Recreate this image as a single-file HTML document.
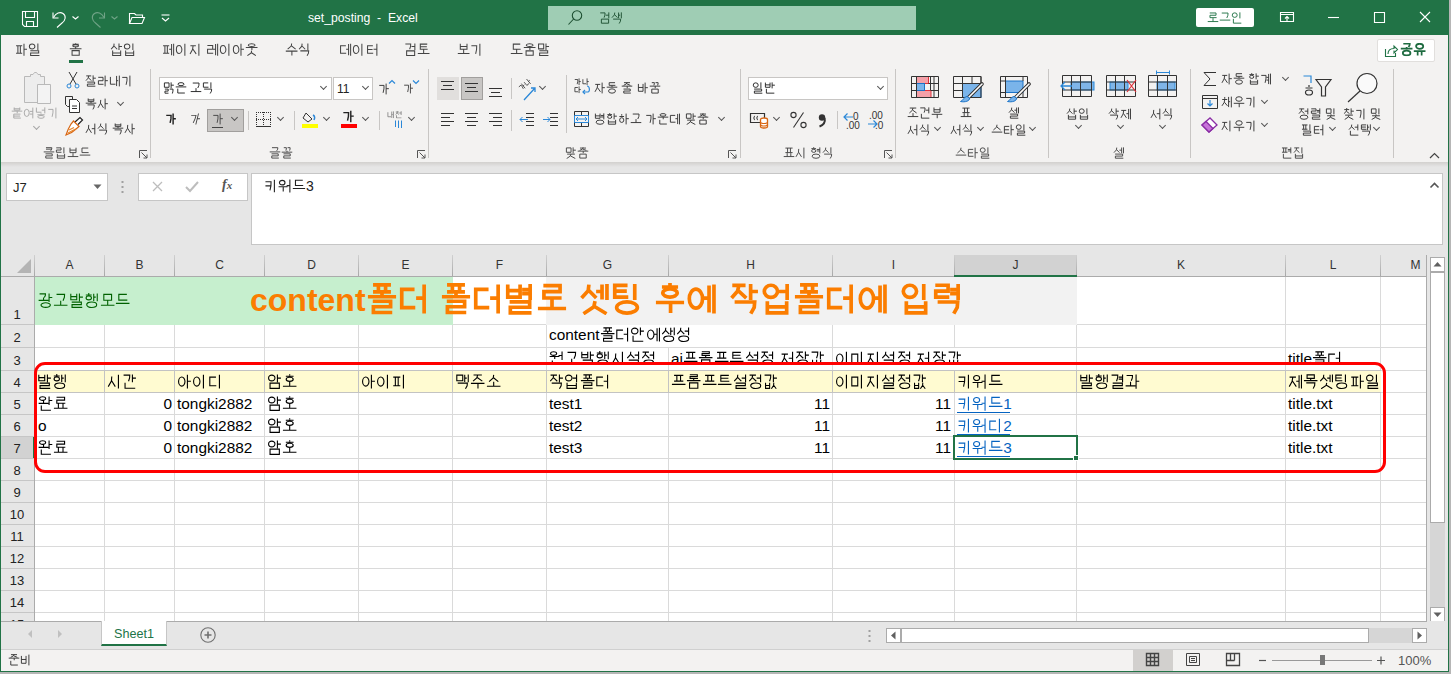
<!DOCTYPE html>
<html><head><meta charset="utf-8">
<style>
*{box-sizing:border-box;margin:0;padding:0}
html,body{width:1451px;height:674px;overflow:hidden;background:#b6b6b6;font-family:"Liberation Sans",sans-serif}
.a{position:absolute}
.t{position:absolute;white-space:nowrap;line-height:1}
svg{display:block}
#win{position:absolute;left:0;top:0;width:1449px;height:672px;background:#f3f2f1;overflow:hidden}
/* title */
#title{left:0;top:0;width:1451px;height:35px;background:#217346}
.wt{color:#fff;font-size:12px}
/* tabs */
.tab{font-size:13.3px;color:#444;top:43px}
/* ribbon */
.rb{font-size:12px;color:#333}
.gl{font-size:12px;color:#444;top:147px}
.sep{position:absolute;width:1px;background:#c8c6c4}
.chev{position:absolute;width:5px;height:5px;border-right:1.2px solid #555;border-bottom:1.2px solid #555;transform:rotate(45deg)}
/* grid */
.ch{position:absolute;top:255px;height:22px;font-size:12px;color:#333;text-align:center;line-height:21px}
.cell{position:absolute;font-size:15.4px;color:#000;white-space:nowrap;line-height:15px;margin-top:-1px}
.cell .hg{--sw:7.2}
.r{text-align:right}
.kt{font-size:0;line-height:0;color:transparent}
.hg{display:inline-block!important;width:1em;height:1em;vertical-align:-0.13em;overflow:visible;fill:none;stroke:currentColor;stroke-width:var(--sw,7.8);stroke-linejoin:miter;stroke-linecap:butt}
</style></head><body><svg width="0" height="0" style="position:absolute;display:block"><defs><symbol id="gac00" viewBox="0 0 100 100"><path d="M10.3 20 L50.3 20 L49.4 49 L42.5 82 M67.6 5 L67.6 95 M67.6 47.3 L90.5 47.3"/></symbol><symbol id="gac04" viewBox="0 0 100 100"><path d="M10.3 7.5 L50.3 7.5 L49.4 26 L42.5 47 M67.6 3 L67.6 53 M67.6 26.5 L90.5 26.5 M19.8 57 L19.8 92.9 L86 92.9"/></symbol><symbol id="gac12" viewBox="0 0 100 100"><path d="M10.3 7.5 L50.3 7.5 L49.4 26 L42.5 47 M67.6 3 L67.6 53 M67.6 26.5 L90.5 26.5 M16.5 57 L16.5 93.3 L43.1 93.3 L43.1 57 M16.5 74.5 L43.1 74.5 M70.2 57 L68.6 74.5 L54.3 96 M69.5 73.4 L86 96"/></symbol><symbol id="gac74" viewBox="0 0 100 100"><path d="M10.3 7.5 L50.3 7.5 L49.4 26 L42.5 47 M81.7 3 L81.7 53 M56.6 26.5 L81.7 26.5 M19.8 57 L19.8 92.9 L86 92.9"/></symbol><symbol id="gac80" viewBox="0 0 100 100"><path d="M10.3 7.5 L50.3 7.5 L49.4 26 L42.5 47 M81.7 3 L81.7 53 M56.6 26.5 L81.7 26.5 M19.8 59.3 L80.2 59.3 L80.2 93.3 L19.8 93.3Z"/></symbol><symbol id="gacb0" viewBox="0 0 100 100"><path d="M10.3 7.5 L50.3 7.5 L49.4 26 L42.5 47 M81.7 3 L81.7 53 M56.6 20.5 L81.7 20.5 M56.6 33 L81.7 33 M17.6 59 L80.2 59 L80.2 75.7 L19.8 75.7 L19.8 93.3 L86 93.3"/></symbol><symbol id="gacc4" viewBox="0 0 100 100"><path d="M10.3 20 L50.3 20 L49.4 49 L42.5 82 M72 7.7 L72 92.3 M87.4 5 L87.4 95 M53.5 36.5 L72 36.5 M53.5 59 L72 59"/></symbol><symbol id="gace0" viewBox="0 0 100 100"><path d="M23 8.6 L75.2 8.6 L74 28 L65 50 M6 79.6 L94 79.6 M50 51 L50 79.6"/></symbol><symbol id="gacf5" viewBox="0 0 100 100"><path d="M24.8 5.6 L73.5 5.6 L72.4 17 L64 30 M6 43 L94 43 M50 31 L50 43 M21.2 75A28.8 18 0 1 0 78.8 75A28.8 18 0 1 0 21.2 75"/></symbol><symbol id="gacfc" viewBox="0 0 100 100"><path d="M10.2 10.2 L48.5 10.2 L47.6 26 L41 44 M4 77.4 L68 77.4 M36 50.4 L36 77.4 M72 4 L72 96 M72 47.2 L92.8 47.2"/></symbol><symbol id="gad11" viewBox="0 0 100 100"><path d="M10.2 5.6 L48.5 5.6 L47.6 17 L41 30 M4 47.6 L68 47.6 M36 30 L36 47.6 M72 3 L72 58 M72 28.8 L92.8 28.8 M19.4 78.5A30.6 14.8 0 1 0 80.6 78.5A30.6 14.8 0 1 0 19.4 78.5"/></symbol><symbol id="gadf8" viewBox="0 0 100 100"><path d="M23 8.6 L75.2 8.6 L74 28 L65 50 M6 67.5 L94 67.5"/></symbol><symbol id="gae00" viewBox="0 0 100 100"><path d="M24.8 5.7 L73.5 5.7 L72.4 18 L64 32 M6 41 L94 41 M21.2 57 L76.9 57 L76.9 74.2 L23.1 74.2 L23.1 92.2 L82 92.2"/></symbol><symbol id="gae30" viewBox="0 0 100 100"><path d="M10.3 20 L50.3 20 L49.4 49 L42.5 82 M74.2 5 L74.2 95"/></symbol><symbol id="gaf34" viewBox="0 0 100 100"><path d="M23.2 5.6 L44.7 5.6 L44.2 17 L40.5 30 M54.6 5.6 L76 5.6 L75.5 17 L71.8 30 M6 43 L94 43 M50 31 L50 43 M21.2 57 L76.9 57 L76.9 74.2 L23.1 74.2 L23.1 92.2 L82 92.2"/></symbol><symbol id="gafc8" viewBox="0 0 100 100"><path d="M23.2 5.4 L44.7 5.4 L44.2 16 L40.5 28 M54.6 5.4 L76 5.4 L75.5 16 L71.8 28 M6 34.4 L94 34.4 M51.8 34.4 L51.8 52 M23.1 59.3 L76.9 59.3 L76.9 92.3 L23.1 92.3Z"/></symbol><symbol id="gb098" viewBox="0 0 100 100"><path d="M11.7 16 L11.7 76.7 L54 76.7 M67.6 5 L67.6 95 M67.6 47.3 L90.5 47.3"/></symbol><symbol id="gb0b4" viewBox="0 0 100 100"><path d="M11.7 16 L11.7 76.7 L54 76.7 M63.2 7.7 L63.2 92.3 M86.1 5 L86.1 95 M63.2 47.3 L76.4 47.3"/></symbol><symbol id="gb123" viewBox="0 0 100 100"><path d="M11.7 5 L11.7 43.6 L54 43.6 M81.7 3 L81.7 53 M56.6 26.5 L81.7 26.5 M50 53.1 L50 60.9 M19.8 64.8 L80.2 64.8 M22.6 82.3A27.4 11.7 0 1 0 77.4 82.3A27.4 11.7 0 1 0 22.6 82.3"/></symbol><symbol id="gb2e4" viewBox="0 0 100 100"><path d="M51.7 20 L11.7 20 L11.7 76.7 L54 76.7 M67.6 5 L67.6 95 M67.6 47.3 L90.5 47.3"/></symbol><symbol id="gb354" viewBox="0 0 100 100"><path d="M51.7 20 L11.7 20 L11.7 76.7 L54 76.7 M81.7 5 L81.7 95 M56.6 47.3 L81.7 47.3"/></symbol><symbol id="gb370" viewBox="0 0 100 100"><path d="M51.7 20 L11.7 20 L11.7 76.7 L54 76.7 M72 7.7 L72 92.3 M87.4 5 L87.4 95 M53.5 47.3 L72 47.3"/></symbol><symbol id="gb3c4" viewBox="0 0 100 100"><path d="M77 8.6 L24.8 8.6 L24.8 46.5 L80 46.5 M6 79.6 L94 79.6 M50 51 L50 79.6"/></symbol><symbol id="gb3d9" viewBox="0 0 100 100"><path d="M75.2 5.6 L26.5 5.6 L26.5 27.9 L78 27.9 M6 43 L94 43 M50 31 L50 43 M21.2 75A28.8 18 0 1 0 78.8 75A28.8 18 0 1 0 21.2 75"/></symbol><symbol id="gb4dc" viewBox="0 0 100 100"><path d="M77 8.6 L24.8 8.6 L24.8 46.5 L80 46.5 M6 67.5 L94 67.5"/></symbol><symbol id="gb514" viewBox="0 0 100 100"><path d="M51.7 20 L11.7 20 L11.7 76.7 L54 76.7 M74.2 5 L74.2 95"/></symbol><symbol id="gb515" viewBox="0 0 100 100"><path d="M51.7 7.5 L11.7 7.5 L11.7 43.6 L54 43.6 M74.2 3 L74.2 53 M17.6 59.3 L80.2 59.3 L78.8 76.5 L68 96"/></symbol><symbol id="gb77c" viewBox="0 0 100 100"><path d="M10.3 19.3 L50.3 19.3 L50.3 47.7 L11.7 47.7 L11.7 77.4 L54 77.4 M67.6 5 L67.6 95 M67.6 47.3 L90.5 47.3"/></symbol><symbol id="gb808" viewBox="0 0 100 100"><path d="M10.3 19.3 L50.3 19.3 L50.3 47.7 L11.7 47.7 L11.7 77.4 L54 77.4 M72 7.7 L72 92.3 M87.4 5 L87.4 95 M53.5 47.3 L72 47.3"/></symbol><symbol id="gb825" viewBox="0 0 100 100"><path d="M10.3 7.1 L50.3 7.1 L50.3 25.2 L11.7 25.2 L11.7 44.1 L54 44.1 M81.7 3 L81.7 53 M56.6 20.5 L81.7 20.5 M56.6 33 L81.7 33 M17.6 59.3 L80.2 59.3 L78.8 76.5 L68 96"/></symbol><symbol id="gb82c" viewBox="0 0 100 100"><path d="M10.3 7.1 L50.3 7.1 L50.3 25.2 L11.7 25.2 L11.7 44.1 L54 44.1 M81.7 3 L81.7 53 M56.6 20.5 L81.7 20.5 M56.6 33 L81.7 33 M17.6 59 L80.2 59 L80.2 75.7 L19.8 75.7 L19.8 93.3 L86 93.3"/></symbol><symbol id="gb85c" viewBox="0 0 100 100"><path d="M23 8.2 L75.2 8.2 L75.2 27.1 L24.8 27.1 L24.8 46.9 L80 46.9 M6 79.6 L94 79.6 M50 51 L50 79.6"/></symbol><symbol id="gb86c" viewBox="0 0 100 100"><path d="M24.8 5.3 L73.5 5.3 L73.5 16.5 L26.5 16.5 L26.5 28.2 L78 28.2 M6 43 L94 43 M50 31 L50 43 M23.1 57.4 L76.9 57.4 L76.9 92.2 L23.1 92.2Z"/></symbol><symbol id="gb8cc" viewBox="0 0 100 100"><path d="M23 8.2 L75.2 8.2 L75.2 27.1 L24.8 27.1 L24.8 46.9 L80 46.9 M6 79.6 L94 79.6 M35 51 L35 79.6 M65 51 L65 79.6"/></symbol><symbol id="gb9bd" viewBox="0 0 100 100"><path d="M10.3 7.1 L50.3 7.1 L50.3 25.2 L11.7 25.2 L11.7 44.1 L54 44.1 M74.2 3 L74.2 53 M19.8 57 L19.8 93.3 L80.2 93.3 L80.2 57 M19.8 74.5 L80.2 74.5"/></symbol><symbol id="gb9d0" viewBox="0 0 100 100"><path d="M11.7 7.5 L50.3 7.5 L50.3 44.1 L11.7 44.1Z M67.6 3 L67.6 53 M67.6 26.5 L90.5 26.5 M17.6 59 L80.2 59 L80.2 75.7 L19.8 75.7 L19.8 93.3 L86 93.3"/></symbol><symbol id="gb9d1" viewBox="0 0 100 100"><path d="M11.7 7.5 L50.3 7.5 L50.3 44.1 L11.7 44.1Z M67.6 3 L67.6 53 M67.6 26.5 L90.5 26.5 M15.6 59 L43.1 59 L43.1 75.7 L16.5 75.7 L16.5 93.3 L45.7 93.3 M55.9 59.3 L83.5 59.3 L82.8 76.5 L78.1 96"/></symbol><symbol id="gb9de" viewBox="0 0 100 100"><path d="M11.7 7.5 L50.3 7.5 L50.3 44.1 L11.7 44.1Z M67.6 3 L67.6 53 M67.6 26.5 L90.5 26.5 M17.6 59.3 L82.4 59.3 M50 59.3 L42.8 76.5 L14 96 M46.4 74.5 L86 96"/></symbol><symbol id="gb9e5" viewBox="0 0 100 100"><path d="M11.7 7.5 L50.3 7.5 L50.3 44.1 L11.7 44.1Z M63.2 4.5 L63.2 51.5 M86.1 3 L86.1 53 M63.2 26.5 L76.4 26.5 M17.6 59.3 L80.2 59.3 L78.8 76.5 L68 96"/></symbol><symbol id="gbaa8" viewBox="0 0 100 100"><path d="M24.8 8.6 L75.2 8.6 L75.2 46.9 L24.8 46.9Z M6 79.6 L94 79.6 M50 51 L50 79.6"/></symbol><symbol id="gbaa9" viewBox="0 0 100 100"><path d="M26.5 5.6 L73.5 5.6 L73.5 28.2 L26.5 28.2Z M6 43 L94 43 M50 31 L50 43 M21.2 57.4 L76.9 57.4 L75.6 75 L66 95"/></symbol><symbol id="gbbf8" viewBox="0 0 100 100"><path d="M11.7 20 L50.3 20 L50.3 77.4 L11.7 77.4Z M74.2 5 L74.2 95"/></symbol><symbol id="gbc0f" viewBox="0 0 100 100"><path d="M11.7 7.5 L50.3 7.5 L50.3 44.1 L11.7 44.1Z M74.2 3 L74.2 53 M50 52.3 L50 61.7 M17.6 64.8 L82.4 64.8 M50 64.8 L42.8 79.6 L14 96 M46.4 78.5 L86 96"/></symbol><symbol id="gbc14" viewBox="0 0 100 100"><path d="M11.7 16 L11.7 77.4 L50.3 77.4 L50.3 16 M11.7 45.7 L50.3 45.7 M67.6 5 L67.6 95 M67.6 47.3 L90.5 47.3"/></symbol><symbol id="gbc18" viewBox="0 0 100 100"><path d="M11.7 5 L11.7 44.1 L50.3 44.1 L50.3 5 M11.7 23.9 L50.3 23.9 M67.6 3 L67.6 53 M67.6 26.5 L90.5 26.5 M19.8 57 L19.8 92.9 L86 92.9"/></symbol><symbol id="gbc1c" viewBox="0 0 100 100"><path d="M11.7 5 L11.7 44.1 L50.3 44.1 L50.3 5 M11.7 23.9 L50.3 23.9 M67.6 3 L67.6 53 M67.6 26.5 L90.5 26.5 M17.6 59 L80.2 59 L80.2 75.7 L19.8 75.7 L19.8 93.3 L86 93.3"/></symbol><symbol id="gbcc4" viewBox="0 0 100 100"><path d="M11.7 5 L11.7 44.1 L50.3 44.1 L50.3 5 M11.7 23.9 L50.3 23.9 M81.7 3 L81.7 53 M56.6 20.5 L81.7 20.5 M56.6 33 L81.7 33 M17.6 59 L80.2 59 L80.2 75.7 L19.8 75.7 L19.8 93.3 L86 93.3"/></symbol><symbol id="gbcd1" viewBox="0 0 100 100"><path d="M11.7 5 L11.7 44.1 L50.3 44.1 L50.3 5 M11.7 23.9 L50.3 23.9 M81.7 3 L81.7 53 M56.6 20.5 L81.7 20.5 M56.6 33 L81.7 33 M17.6 76.5A32.4 17.6 0 1 0 82.4 76.5A32.4 17.6 0 1 0 17.6 76.5"/></symbol><symbol id="gbcf4" viewBox="0 0 100 100"><path d="M24.8 6 L24.8 46.9 L75.2 46.9 L75.2 6 M24.8 25.8 L75.2 25.8 M6 79.6 L94 79.6 M50 51 L50 79.6"/></symbol><symbol id="gbcf5" viewBox="0 0 100 100"><path d="M26.5 4 L26.5 28.2 L73.5 28.2 L73.5 4 M26.5 15.7 L73.5 15.7 M6 43 L94 43 M50 31 L50 43 M21.2 57.4 L76.9 57.4 L75.6 75 L66 95"/></symbol><symbol id="gbd80" viewBox="0 0 100 100"><path d="M24.8 4 L24.8 43.1 L75.2 43.1 L75.2 4 M24.8 22.9 L75.2 22.9 M6 61 L94 61 M51.8 61 L51.8 93.5"/></symbol><symbol id="gbd99" viewBox="0 0 100 100"><path d="M26.5 4 L26.5 26.3 L73.5 26.3 L73.5 4 M26.5 14.8 L73.5 14.8 M6 34.4 L94 34.4 M51.8 34.4 L51.8 52 M78.8 59.3 L23.1 59.3 L23.1 92.3 L82 92.3 M23.1 75.6 L75.6 75.6"/></symbol><symbol id="gbe44" viewBox="0 0 100 100"><path d="M11.7 16 L11.7 77.4 L50.3 77.4 L50.3 16 M11.7 45.7 L50.3 45.7 M74.2 5 L74.2 95"/></symbol><symbol id="gc0ac" viewBox="0 0 100 100"><path d="M31 16 L28.7 45.7 L8 82 M30.1 43.7 L54 82 M67.6 5 L67.6 95 M67.6 47.3 L90.5 47.3"/></symbol><symbol id="gc0ad" viewBox="0 0 100 100"><path d="M31 5 L28.7 23.9 L8 47 M30.1 22.6 L54 47 M67.6 3 L67.6 53 M67.6 26.5 L90.5 26.5 M17.6 59.3 L80.2 59.3 L78.8 76.5 L68 96"/></symbol><symbol id="gc0bd" viewBox="0 0 100 100"><path d="M31 5 L28.7 23.9 L8 47 M30.1 22.6 L54 47 M67.6 3 L67.6 53 M67.6 26.5 L90.5 26.5 M19.8 57 L19.8 93.3 L80.2 93.3 L80.2 57 M19.8 74.5 L80.2 74.5"/></symbol><symbol id="gc0c9" viewBox="0 0 100 100"><path d="M31 5 L28.7 23.9 L8 47 M30.1 22.6 L54 47 M63.2 4.5 L63.2 51.5 M86.1 3 L86.1 53 M63.2 26.5 L76.4 26.5 M17.6 59.3 L80.2 59.3 L78.8 76.5 L68 96"/></symbol><symbol id="gc0dd" viewBox="0 0 100 100"><path d="M31 5 L28.7 23.9 L8 47 M30.1 22.6 L54 47 M63.2 4.5 L63.2 51.5 M86.1 3 L86.1 53 M63.2 26.5 L76.4 26.5 M17.6 76.5A32.4 17.6 0 1 0 82.4 76.5A32.4 17.6 0 1 0 17.6 76.5"/></symbol><symbol id="gc11c" viewBox="0 0 100 100"><path d="M31 16 L28.7 45.7 L8 82 M30.1 43.7 L54 82 M81.7 5 L81.7 95 M56.6 47.3 L81.7 47.3"/></symbol><symbol id="gc120" viewBox="0 0 100 100"><path d="M31 5 L28.7 23.9 L8 47 M30.1 22.6 L54 47 M81.7 3 L81.7 53 M56.6 26.5 L81.7 26.5 M19.8 57 L19.8 92.9 L86 92.9"/></symbol><symbol id="gc124" viewBox="0 0 100 100"><path d="M31 5 L28.7 23.9 L8 47 M30.1 22.6 L54 47 M81.7 3 L81.7 53 M56.6 26.5 L81.7 26.5 M17.6 59 L80.2 59 L80.2 75.7 L19.8 75.7 L19.8 93.3 L86 93.3"/></symbol><symbol id="gc131" viewBox="0 0 100 100"><path d="M31 5 L28.7 23.9 L8 47 M30.1 22.6 L54 47 M81.7 3 L81.7 53 M56.6 26.5 L81.7 26.5 M17.6 76.5A32.4 17.6 0 1 0 82.4 76.5A32.4 17.6 0 1 0 17.6 76.5"/></symbol><symbol id="gc140" viewBox="0 0 100 100"><path d="M31 5 L28.7 23.9 L8 47 M30.1 22.6 L54 47 M72 4.5 L72 51.5 M87.4 3 L87.4 53 M53.5 26.5 L72 26.5 M17.6 59 L80.2 59 L80.2 75.7 L19.8 75.7 L19.8 93.3 L86 93.3"/></symbol><symbol id="gc14b" viewBox="0 0 100 100"><path d="M31 5 L28.7 23.9 L8 47 M30.1 22.6 L54 47 M72 4.5 L72 51.5 M87.4 3 L87.4 53 M53.5 26.5 L72 26.5 M50 57 L46.4 74.5 L14 96 M48.6 73.4 L86 96"/></symbol><symbol id="gc18c" viewBox="0 0 100 100"><path d="M50 6 L47 25.8 L20 50 M48.8 24.5 L80 50 M6 79.6 L94 79.6 M50 51 L50 79.6"/></symbol><symbol id="gc218" viewBox="0 0 100 100"><path d="M50 4 L47 22.9 L20 46 M48.8 21.6 L80 46 M6 61 L94 61 M51.8 61 L51.8 93.5"/></symbol><symbol id="gc2a4" viewBox="0 0 100 100"><path d="M50 6 L47 25.8 L20 50 M48.8 24.5 L80 50 M6 67.5 L94 67.5"/></symbol><symbol id="gc2dc" viewBox="0 0 100 100"><path d="M31 16 L28.7 45.7 L8 82 M30.1 43.7 L54 82 M74.2 5 L74.2 95"/></symbol><symbol id="gc2dd" viewBox="0 0 100 100"><path d="M31 5 L28.7 23.9 L8 47 M30.1 22.6 L54 47 M74.2 3 L74.2 53 M17.6 59.3 L80.2 59.3 L78.8 76.5 L68 96"/></symbol><symbol id="gc544" viewBox="0 0 100 100"><path d="M10.3 49A20.7 29.7 0 1 0 51.7 49A20.7 29.7 0 1 0 10.3 49 M67.6 5 L67.6 95 M67.6 47.3 L90.5 47.3"/></symbol><symbol id="gc548" viewBox="0 0 100 100"><path d="M10.3 26A20.7 18.9 0 1 0 51.7 26A20.7 18.9 0 1 0 10.3 26 M67.6 3 L67.6 53 M67.6 26.5 L90.5 26.5 M19.8 57 L19.8 92.9 L86 92.9"/></symbol><symbol id="gc554" viewBox="0 0 100 100"><path d="M10.3 26A20.7 18.9 0 1 0 51.7 26A20.7 18.9 0 1 0 10.3 26 M67.6 3 L67.6 53 M67.6 26.5 L90.5 26.5 M19.8 59.3 L80.2 59.3 L80.2 93.3 L19.8 93.3Z"/></symbol><symbol id="gc5c5" viewBox="0 0 100 100"><path d="M10.3 26A20.7 18.9 0 1 0 51.7 26A20.7 18.9 0 1 0 10.3 26 M81.7 3 L81.7 53 M56.6 26.5 L81.7 26.5 M19.8 57 L19.8 93.3 L80.2 93.3 L80.2 57 M19.8 74.5 L80.2 74.5"/></symbol><symbol id="gc5d0" viewBox="0 0 100 100"><path d="M10.3 49A20.7 29.7 0 1 0 51.7 49A20.7 29.7 0 1 0 10.3 49 M72 7.7 L72 92.3 M87.4 5 L87.4 95 M53.5 47.3 L72 47.3"/></symbol><symbol id="gc5ec" viewBox="0 0 100 100"><path d="M10.3 49A20.7 29.7 0 1 0 51.7 49A20.7 29.7 0 1 0 10.3 49 M81.7 5 L81.7 95 M56.6 36.5 L81.7 36.5 M56.6 59 L81.7 59"/></symbol><symbol id="gc644" viewBox="0 0 100 100"><path d="M10.2 17A19.8 11.7 0 1 0 49.8 17A19.8 11.7 0 1 0 10.2 17 M4 47.6 L68 47.6 M36 30 L36 47.6 M72 3 L72 58 M72 28.8 L92.8 28.8 M21.4 62 L21.4 92.4 L84 92.4"/></symbol><symbol id="gc6b0" viewBox="0 0 100 100"><path d="M23 25A27 18.9 0 1 0 77 25A27 18.9 0 1 0 23 25 M6 61 L94 61 M51.8 61 L51.8 93.5"/></symbol><symbol id="gc6b4" viewBox="0 0 100 100"><path d="M24.8 16A25.2 10.8 0 1 0 75.2 16A25.2 10.8 0 1 0 24.8 16 M6 34.4 L94 34.4 M51.8 34.4 L51.8 52 M23.1 57 L23.1 92 L82 92"/></symbol><symbol id="gc6c0" viewBox="0 0 100 100"><path d="M24.8 16A25.2 10.8 0 1 0 75.2 16A25.2 10.8 0 1 0 24.8 16 M6 34.4 L94 34.4 M51.8 34.4 L51.8 52 M23.1 59.3 L76.9 59.3 L76.9 92.3 L23.1 92.3Z"/></symbol><symbol id="gc6c3" viewBox="0 0 100 100"><path d="M24.8 16A25.2 10.8 0 1 0 75.2 16A25.2 10.8 0 1 0 24.8 16 M6 34.4 L94 34.4 M51.8 34.4 L51.8 52 M50 57 L46.8 74.1 L18 95 M48.7 73 L82 95"/></symbol><symbol id="gc6cc" viewBox="0 0 100 100"><path d="M10.2 26A19.8 16.2 0 1 0 49.8 26A19.8 16.2 0 1 0 10.2 26 M4 55.6 L68 55.6 M37.3 55.6 L37.3 89.4 M84.8 4 L84.8 96 M62 47.2 L84.8 47.2"/></symbol><symbol id="gc6d0" viewBox="0 0 100 100"><path d="M10.2 17A19.8 11.7 0 1 0 49.8 17A19.8 11.7 0 1 0 10.2 17 M4 35.5 L68 35.5 M37.3 35.5 L37.3 52 M84.8 3 L84.8 58 M62 28.8 L84.8 28.8 M21.4 62 L21.4 92.4 L84 92.4"/></symbol><symbol id="gc720" viewBox="0 0 100 100"><path d="M23 25A27 18.9 0 1 0 77 25A27 18.9 0 1 0 23 25 M6 61 L94 61 M35 61 L35 93.5 M65 61 L65 93.5"/></symbol><symbol id="gc740" viewBox="0 0 100 100"><path d="M24.8 18A25.2 12.6 0 1 0 75.2 18A25.2 12.6 0 1 0 24.8 18 M6 41 L94 41 M23.1 55 L23.1 91.8 L82 91.8"/></symbol><symbol id="gc774" viewBox="0 0 100 100"><path d="M10.3 49A20.7 29.7 0 1 0 51.7 49A20.7 29.7 0 1 0 10.3 49 M74.2 5 L74.2 95"/></symbol><symbol id="gc778" viewBox="0 0 100 100"><path d="M10.3 26A20.7 18.9 0 1 0 51.7 26A20.7 18.9 0 1 0 10.3 26 M74.2 3 L74.2 53 M19.8 57 L19.8 92.9 L86 92.9"/></symbol><symbol id="gc77c" viewBox="0 0 100 100"><path d="M10.3 26A20.7 18.9 0 1 0 51.7 26A20.7 18.9 0 1 0 10.3 26 M74.2 3 L74.2 53 M17.6 59 L80.2 59 L80.2 75.7 L19.8 75.7 L19.8 93.3 L86 93.3"/></symbol><symbol id="gc785" viewBox="0 0 100 100"><path d="M10.3 26A20.7 18.9 0 1 0 51.7 26A20.7 18.9 0 1 0 10.3 26 M74.2 3 L74.2 53 M19.8 57 L19.8 93.3 L80.2 93.3 L80.2 57 M19.8 74.5 L80.2 74.5"/></symbol><symbol id="gc790" viewBox="0 0 100 100"><path d="M10.3 20 L51.7 20 M31 20 L26.4 49 L8 82 M28.7 45.7 L54 82 M67.6 5 L67.6 95 M67.6 47.3 L90.5 47.3"/></symbol><symbol id="gc791" viewBox="0 0 100 100"><path d="M10.3 7.5 L51.7 7.5 M31 7.5 L26.4 26 L8 47 M28.7 23.9 L54 47 M67.6 3 L67.6 53 M67.6 26.5 L90.5 26.5 M17.6 59.3 L80.2 59.3 L78.8 76.5 L68 96"/></symbol><symbol id="gc798" viewBox="0 0 100 100"><path d="M10.3 7.5 L51.7 7.5 M31 7.5 L26.4 26 L8 47 M28.7 23.9 L54 47 M67.6 3 L67.6 53 M67.6 26.5 L90.5 26.5 M17.6 59 L80.2 59 L80.2 75.7 L19.8 75.7 L19.8 93.3 L86 93.3"/></symbol><symbol id="gc7a5" viewBox="0 0 100 100"><path d="M10.3 7.5 L51.7 7.5 M31 7.5 L26.4 26 L8 47 M28.7 23.9 L54 47 M67.6 3 L67.6 53 M67.6 26.5 L90.5 26.5 M17.6 76.5A32.4 17.6 0 1 0 82.4 76.5A32.4 17.6 0 1 0 17.6 76.5"/></symbol><symbol id="gc800" viewBox="0 0 100 100"><path d="M10.3 20 L51.7 20 M31 20 L26.4 49 L8 82 M28.7 45.7 L54 82 M81.7 5 L81.7 95 M56.6 47.3 L81.7 47.3"/></symbol><symbol id="gc815" viewBox="0 0 100 100"><path d="M10.3 7.5 L51.7 7.5 M31 7.5 L26.4 26 L8 47 M28.7 23.9 L54 47 M81.7 3 L81.7 53 M56.6 26.5 L81.7 26.5 M17.6 76.5A32.4 17.6 0 1 0 82.4 76.5A32.4 17.6 0 1 0 17.6 76.5"/></symbol><symbol id="gc81c" viewBox="0 0 100 100"><path d="M10.3 20 L51.7 20 M31 20 L26.4 49 L8 82 M28.7 45.7 L54 82 M72 7.7 L72 92.3 M87.4 5 L87.4 95 M53.5 47.3 L72 47.3"/></symbol><symbol id="gc870" viewBox="0 0 100 100"><path d="M23 8.6 L77 8.6 M50 8.6 L44 28 L20 50 M47 25.8 L80 50 M6 79.6 L94 79.6 M50 51 L50 79.6"/></symbol><symbol id="gc8fc" viewBox="0 0 100 100"><path d="M23 6.5 L77 6.5 M50 6.5 L44 25 L20 46 M47 22.9 L80 46 M6 61 L94 61 M51.8 61 L51.8 93.5"/></symbol><symbol id="gc900" viewBox="0 0 100 100"><path d="M24.8 5.4 L75.2 5.4 M50 5.4 L44.4 16 L22 28 M47.2 14.8 L78 28 M6 34.4 L94 34.4 M51.8 34.4 L51.8 52 M23.1 57 L23.1 92 L82 92"/></symbol><symbol id="gc904" viewBox="0 0 100 100"><path d="M24.8 5.4 L75.2 5.4 M50 5.4 L44.4 16 L22 28 M47.2 14.8 L78 28 M6 34.4 L94 34.4 M51.8 34.4 L51.8 52 M21.2 58.9 L76.9 58.9 L76.9 75.2 L23.1 75.2 L23.1 92.3 L82 92.3"/></symbol><symbol id="gc9c0" viewBox="0 0 100 100"><path d="M10.3 20 L51.7 20 M31 20 L26.4 49 L8 82 M28.7 45.7 L54 82 M74.2 5 L74.2 95"/></symbol><symbol id="gc9d1" viewBox="0 0 100 100"><path d="M10.3 7.5 L51.7 7.5 M31 7.5 L26.4 26 L8 47 M28.7 23.9 L54 47 M74.2 3 L74.2 53 M19.8 57 L19.8 93.3 L80.2 93.3 L80.2 57 M19.8 74.5 L80.2 74.5"/></symbol><symbol id="gcc3e" viewBox="0 0 100 100"><path d="M31 -0 L31 10 M10.3 13.4 L51.7 13.4 M31 13.4 L26.4 29.4 L8 47 M28.7 28.1 L54 47 M67.6 3 L67.6 53 M67.6 26.5 L90.5 26.5 M17.6 59.3 L82.4 59.3 M50 59.3 L42.8 76.5 L14 96 M46.4 74.5 L86 96"/></symbol><symbol id="gcc44" viewBox="0 0 100 100"><path d="M31 8.1 L31 23.9 M10.3 29.2 L51.7 29.2 M31 29.2 L26.4 54.3 L8 82 M28.7 52.3 L54 82 M63.2 7.7 L63.2 92.3 M86.1 5 L86.1 95 M63.2 47.3 L76.4 47.3"/></symbol><symbol id="gcc9c" viewBox="0 0 100 100"><path d="M31 -0 L31 10 M10.3 13.4 L51.7 13.4 M31 13.4 L26.4 29.4 L8 47 M28.7 28.1 L54 47 M81.7 3 L81.7 53 M56.6 26.5 L81.7 26.5 M19.8 57 L19.8 92.9 L86 92.9"/></symbol><symbol id="gcda4" viewBox="0 0 100 100"><path d="M50 1.1 L50 6.9 M24.8 8.8 L75.2 8.8 M50 8.8 L44.4 17.9 L22 28 M47.2 17.2 L78 28 M6 34.4 L94 34.4 M51.8 34.4 L51.8 52 M23.1 59.3 L76.9 59.3 L76.9 92.3 L23.1 92.3Z"/></symbol><symbol id="gd074" viewBox="0 0 100 100"><path d="M24.8 5.7 L73.5 5.7 L72.4 18 L64 32 M24.8 18 L72.4 18 M6 41 L94 41 M21.2 57 L76.9 57 L76.9 74.2 L23.1 74.2 L23.1 92.2 L82 92.2"/></symbol><symbol id="gd0a4" viewBox="0 0 100 100"><path d="M10.3 20 L50.3 20 L49.4 49 L42.5 82 M10.3 49 L49.4 49 M74.2 5 L74.2 95"/></symbol><symbol id="gd0c0" viewBox="0 0 100 100"><path d="M51.7 20 L11.7 20 L11.7 77.4 L54 77.4 M11.7 48.3 L49.4 48.3 M67.6 5 L67.6 95 M67.6 47.3 L90.5 47.3"/></symbol><symbol id="gd0dd" viewBox="0 0 100 100"><path d="M51.7 7.5 L11.7 7.5 L11.7 44.1 L54 44.1 M11.7 25.6 L49.4 25.6 M63.2 4.5 L63.2 51.5 M86.1 3 L86.1 53 M63.2 26.5 L76.4 26.5 M17.6 59.3 L80.2 59.3 L78.8 76.5 L68 96"/></symbol><symbol id="gd130" viewBox="0 0 100 100"><path d="M51.7 20 L11.7 20 L11.7 77.4 L54 77.4 M11.7 48.3 L49.4 48.3 M81.7 5 L81.7 95 M56.6 47.3 L81.7 47.3"/></symbol><symbol id="gd1a0" viewBox="0 0 100 100"><path d="M77 8.6 L24.8 8.6 L24.8 46.9 L80 46.9 M24.8 27.6 L74 27.6 M6 79.6 L94 79.6 M50 51 L50 79.6"/></symbol><symbol id="gd2b8" viewBox="0 0 100 100"><path d="M77 8.6 L24.8 8.6 L24.8 46.9 L80 46.9 M24.8 27.6 L74 27.6 M6 67.5 L94 67.5"/></symbol><symbol id="gd305" viewBox="0 0 100 100"><path d="M51.7 7.5 L11.7 7.5 L11.7 44.1 L54 44.1 M11.7 25.6 L49.4 25.6 M74.2 3 L74.2 53 M17.6 76.5A32.4 17.6 0 1 0 82.4 76.5A32.4 17.6 0 1 0 17.6 76.5"/></symbol><symbol id="gd30c" viewBox="0 0 100 100"><path d="M8 20.6 L54 20.6 M21.8 20.6 L21.8 76.7 M40.2 20.6 L40.2 76.7 M8 76.7 L54 76.7 M67.6 5 L67.6 95 M67.6 47.3 L90.5 47.3"/></symbol><symbol id="gd398" viewBox="0 0 100 100"><path d="M8 20.6 L54 20.6 M21.8 20.6 L21.8 76.7 M40.2 20.6 L40.2 76.7 M8 76.7 L54 76.7 M72 7.7 L72 92.3 M87.4 5 L87.4 95 M53.5 47.3 L72 47.3"/></symbol><symbol id="gd3b8" viewBox="0 0 100 100"><path d="M8 7.9 L54 7.9 M21.8 7.9 L21.8 43.6 M40.2 7.9 L40.2 43.6 M8 43.6 L54 43.6 M81.7 3 L81.7 53 M56.6 20.5 L81.7 20.5 M56.6 33 L81.7 33 M19.8 57 L19.8 92.9 L86 92.9"/></symbol><symbol id="gd3f4" viewBox="0 0 100 100"><path d="M22 5.8 L78 5.8 M38.8 5.8 L38.8 27.9 M61.2 5.8 L61.2 27.9 M22 27.9 L78 27.9 M6 43 L94 43 M50 31 L50 43 M21.2 57 L76.9 57 L76.9 74.2 L23.1 74.2 L23.1 92.2 L82 92.2"/></symbol><symbol id="gd45c" viewBox="0 0 100 100"><path d="M20 9.1 L80 9.1 M38 9.1 L38 46.5 M62 9.1 L62 46.5 M20 46.5 L80 46.5 M6 79.6 L94 79.6 M35 51 L35 79.6 M65 51 L65 79.6"/></symbol><symbol id="gd504" viewBox="0 0 100 100"><path d="M20 9.1 L80 9.1 M38 9.1 L38 46.5 M62 9.1 L62 46.5 M20 46.5 L80 46.5 M6 67.5 L94 67.5"/></symbol><symbol id="gd53c" viewBox="0 0 100 100"><path d="M8 20.6 L54 20.6 M21.8 20.6 L21.8 76.7 M40.2 20.6 L40.2 76.7 M8 76.7 L54 76.7 M74.2 5 L74.2 95"/></symbol><symbol id="gd544" viewBox="0 0 100 100"><path d="M8 7.9 L54 7.9 M21.8 7.9 L21.8 43.6 M40.2 7.9 L40.2 43.6 M8 43.6 L54 43.6 M74.2 3 L74.2 53 M17.6 59 L80.2 59 L80.2 75.7 L19.8 75.7 L19.8 93.3 L86 93.3"/></symbol><symbol id="gd558" viewBox="0 0 100 100"><path d="M31 9.4 L31 22.6 M11.7 29.2 L50.3 29.2 M13.5 58.9A17.5 19.8 0 1 0 48.5 58.9A17.5 19.8 0 1 0 13.5 58.9 M67.6 5 L67.6 95 M67.6 47.3 L90.5 47.3"/></symbol><symbol id="gd569" viewBox="0 0 100 100"><path d="M31 0.8 L31 9.2 M11.7 13.4 L50.3 13.4 M13.5 32.3A17.5 12.6 0 1 0 48.5 32.3A17.5 12.6 0 1 0 13.5 32.3 M67.6 3 L67.6 53 M67.6 26.5 L90.5 26.5 M19.8 57 L19.8 93.3 L80.2 93.3 L80.2 57 M19.8 74.5 L80.2 74.5"/></symbol><symbol id="gd589" viewBox="0 0 100 100"><path d="M31 0.8 L31 9.2 M11.7 13.4 L50.3 13.4 M13.5 32.3A17.5 12.6 0 1 0 48.5 32.3A17.5 12.6 0 1 0 13.5 32.3 M63.2 4.5 L63.2 51.5 M86.1 3 L86.1 53 M63.2 26.5 L76.4 26.5 M17.6 76.5A32.4 17.6 0 1 0 82.4 76.5A32.4 17.6 0 1 0 17.6 76.5"/></symbol><symbol id="gd615" viewBox="0 0 100 100"><path d="M31 0.8 L31 9.2 M11.7 13.4 L50.3 13.4 M13.5 32.3A17.5 12.6 0 1 0 48.5 32.3A17.5 12.6 0 1 0 13.5 32.3 M81.7 3 L81.7 53 M56.6 20.5 L81.7 20.5 M56.6 33 L81.7 33 M17.6 76.5A32.4 17.6 0 1 0 82.4 76.5A32.4 17.6 0 1 0 17.6 76.5"/></symbol><symbol id="gd638" viewBox="0 0 100 100"><path d="M50 1.6 L50 10.4 M24.8 14.8 L75.2 14.8 M27.2 34.6A22.8 13.2 0 1 0 72.8 34.6A22.8 13.2 0 1 0 27.2 34.6 M6 79.6 L94 79.6 M50 51 L50 79.6"/></symbol><symbol id="gd648" viewBox="0 0 100 100"><path d="M50 1.4 L50 6.6 M26.5 9.2 L73.5 9.2 M28.7 20.9A21.3 7.8 0 1 0 71.3 20.9A21.3 7.8 0 1 0 28.7 20.9 M6 43 L94 43 M50 31 L50 43 M23.1 57.4 L76.9 57.4 L76.9 92.2 L23.1 92.2Z"/></symbol><symbol id="gd6c4" viewBox="0 0 100 100"><path d="M50 -0.2 L50 8.2 M24.8 12.4 L75.2 12.4 M27.2 31.3A22.8 12.6 0 1 0 72.8 31.3A22.8 12.6 0 1 0 27.2 31.3 M6 61 L94 61 M51.8 61 L51.8 93.5"/></symbol></defs></svg>
<div id="win">

<!-- TITLE BAR -->
<div id="title" class="a">
 <svg class="a" style="left:0;top:0" width="180" height="35" fill="none" stroke="#fff" stroke-width="1.1">
  <path d="M22.5 11.5H37.5V26.5H24.5L22.5 24.5Z"/>
  <path d="M25.5 11.5V17.5H34.5V11.5"/>
  <path d="M26.5 26.5V21.5H33.5V26.5"/>
  <path d="M53 12.5V18H58.5"/>
  <path d="M53.5 17.5C56 13 60 11.5 63 13.5C66.5 16 65.5 20.5 62 23L57 27.5"/>
  <path d="M72.5 16.5L75.5 19L78.5 16.5"/>
  <g stroke="#6fa386">
  <path d="M104.5 12.5V18H99"/>
  <path d="M104 17.5C101.5 13 97.5 11.5 94.5 13.5C91 16 92 20.5 95.5 23L100.5 27.5"/>
  <path d="M111.5 16.5L114.5 19L117.5 16.5"/>
  </g>
  <path d="M129.5 23.5V13.5H134.5L136 15H142.5V17.5"/>
  <path d="M129.5 23.5L132 17.5H144.5L142 23.5Z"/>
  <path d="M161.5 15H169.5"/>
  <path d="M162 18L165.5 21L169 18"/>
 </svg>
 <div class="t wt" style="left:308px;top:12px;font-size:12.2px">set_posting&nbsp; - &nbsp;Excel</div>
 <div class="a" style="left:548px;top:6px;width:368px;height:24px;background:#9fcdb4"></div>
 <svg class="a" style="left:560px;top:6px" width="30" height="24" fill="none" stroke="#1d4f31" stroke-width="1.1">
  <circle cx="17" cy="9.5" r="4.7"/><path d="M13.6 13L8.5 18.5"/>
 </svg>
 <div class="t" style="left:599px;top:12px;font-size:12px;color:#1d4f31"><span class="kt">검색</span><svg class="hg" viewBox="0 0 100 100"><use href="#gac80"/></svg><svg class="hg" viewBox="0 0 100 100"><use href="#gc0c9"/></svg></div>
 <div class="a" style="left:1196px;top:8px;width:58px;height:19px;background:#fff;border-radius:2px"></div>
 <div class="t" style="left:1207px;top:12px;font-size:12px;color:#217346"><span class="kt">로그인</span><svg class="hg" viewBox="0 0 100 100"><use href="#gb85c"/></svg><svg class="hg" viewBox="0 0 100 100"><use href="#gadf8"/></svg><svg class="hg" viewBox="0 0 100 100"><use href="#gc778"/></svg></div>
 <svg class="a" style="left:1270px;top:0" width="170" height="35" fill="none" stroke="#fff" stroke-width="1.1">
  <path d="M10.5 12.5H23.5V21.5H10.5Z M10.5 14.5H23.5"/>
  <path d="M17 21V16.5 M15 18.5L17 16.5L19 18.5"/>
  <path d="M58 17.5H69"/>
  <path d="M104.5 12.5H114.5V22.5H104.5Z"/>
  <path d="M150 12L160 22 M160 12L150 22"/>
 </svg>
</div>
<!-- TABS -->
<div class="t tab" style="left:15px"><span class="kt">파일</span><svg class="hg" viewBox="0 0 100 100"><use href="#gd30c"/></svg><svg class="hg" viewBox="0 0 100 100"><use href="#gc77c"/></svg></div>
<div class="t tab" style="left:69px"><span class="kt">홈</span><svg class="hg" viewBox="0 0 100 100"><use href="#gd648"/></svg></div>
<div class="a" style="left:69px;top:60px;width:14px;height:3px;background:#217346"></div>
<div class="t tab" style="left:110px"><span class="kt">삽입</span><svg class="hg" viewBox="0 0 100 100"><use href="#gc0bd"/></svg><svg class="hg" viewBox="0 0 100 100"><use href="#gc785"/></svg></div>
<div class="t tab" style="left:162px"><span class="kt">페이지</span><svg class="hg" viewBox="0 0 100 100"><use href="#gd398"/></svg><svg class="hg" viewBox="0 0 100 100"><use href="#gc774"/></svg><svg class="hg" viewBox="0 0 100 100"><use href="#gc9c0"/></svg> <span class="kt">레이아웃</span><svg class="hg" viewBox="0 0 100 100"><use href="#gb808"/></svg><svg class="hg" viewBox="0 0 100 100"><use href="#gc774"/></svg><svg class="hg" viewBox="0 0 100 100"><use href="#gc544"/></svg><svg class="hg" viewBox="0 0 100 100"><use href="#gc6c3"/></svg></div>
<div class="t tab" style="left:285px"><span class="kt">수식</span><svg class="hg" viewBox="0 0 100 100"><use href="#gc218"/></svg><svg class="hg" viewBox="0 0 100 100"><use href="#gc2dd"/></svg></div>
<div class="t tab" style="left:339px"><span class="kt">데이터</span><svg class="hg" viewBox="0 0 100 100"><use href="#gb370"/></svg><svg class="hg" viewBox="0 0 100 100"><use href="#gc774"/></svg><svg class="hg" viewBox="0 0 100 100"><use href="#gd130"/></svg></div>
<div class="t tab" style="left:404px"><span class="kt">검토</span><svg class="hg" viewBox="0 0 100 100"><use href="#gac80"/></svg><svg class="hg" viewBox="0 0 100 100"><use href="#gd1a0"/></svg></div>
<div class="t tab" style="left:457px"><span class="kt">보기</span><svg class="hg" viewBox="0 0 100 100"><use href="#gbcf4"/></svg><svg class="hg" viewBox="0 0 100 100"><use href="#gae30"/></svg></div>
<div class="t tab" style="left:510px"><span class="kt">도움말</span><svg class="hg" viewBox="0 0 100 100"><use href="#gb3c4"/></svg><svg class="hg" viewBox="0 0 100 100"><use href="#gc6c0"/></svg><svg class="hg" viewBox="0 0 100 100"><use href="#gb9d0"/></svg></div>
<div class="a" style="left:1377px;top:39px;width:58px;height:23px;background:#fff;border:1px solid #e1dfdd;border-radius:2px"></div>
<svg class="a" style="left:1380px;top:40px" width="20" height="20" fill="none" stroke="#217346" stroke-width="1.1">
 <path d="M5.5 9V16.5H15.5V13"/><path d="M8 14C8 10 10 8.5 14 8.5V6L17.5 9.5L14 13V10.5"/>
</svg>
<div class="t" style="left:1400px;top:43px;font-size:13.3px;color:#1e6b40;--sw:13"><span class="kt">공유</span><svg class="hg" viewBox="0 0 100 100"><use href="#gacf5"/></svg><svg class="hg" viewBox="0 0 100 100"><use href="#gc720"/></svg></div>

<!-- RIBBON -->
<div class="a" style="left:0;top:162px;width:1449px;height:5px;background:linear-gradient(#d2d0ce,#e6e6e6)"></div>
<!-- clipboard -->
<svg class="a" style="left:20px;top:70px" width="40" height="36" fill="#ededed" stroke="#b9b9b9" stroke-width="1">
 <path d="M4.5 6.5H10.5V4.5H13L14.5 2.5H16.5L18 4.5H20.5V6.5H24.5V32.5H4.5Z"/>
 <path d="M17.5 14.5H30.5V33.5H17.5Z" fill="#f3f3f3"/>
</svg>
<div class="t rb" style="left:11px;top:107px;color:#a6a6a6"><span class="kt">붙여넣기</span><svg class="hg" viewBox="0 0 100 100"><use href="#gbd99"/></svg><svg class="hg" viewBox="0 0 100 100"><use href="#gc5ec"/></svg><svg class="hg" viewBox="0 0 100 100"><use href="#gb123"/></svg><svg class="hg" viewBox="0 0 100 100"><use href="#gae30"/></svg></div>
<div class="chev" style="left:34px;top:124px;border-color:#a6a6a6"></div>
<svg class="a" style="left:64px;top:70px" width="20" height="70" fill="none" stroke="#333" stroke-width="1">
 <path d="M5 2L12 14 M13 2L6 14"/>
 <circle cx="5" cy="16" r="2" stroke="#2b88d8"/><circle cx="13" cy="16" r="2" stroke="#2b88d8"/>
 <path d="M1.5 26.5H8.5V36.5H3.5L1.5 34.5Z"/>
 <path d="M5.5 29.5H12.5L15.5 32.5V42.5H5.5Z" fill="#fff"/>
 <path d="M8 36H13 M8 38.5H13"/>
 <path d="M11 52L16 47.5L18.5 50L14 54.5" fill="#fff" stroke="#222" stroke-width="1.2"/>
 <path d="M9.5 51L15 56.5L12 59C9 62 5 64 2 65C3 62 4.5 58 7 54Z" fill="#fff" stroke="#d86613" stroke-width="1.2"/>
 <path d="M5 60L10 57.5 M4 63L11.5 59" stroke="#e8892f" stroke-width="1.3"/>
</svg>
<div class="t rb" style="left:85px;top:75px"><span class="kt">잘라내기</span><svg class="hg" viewBox="0 0 100 100"><use href="#gc798"/></svg><svg class="hg" viewBox="0 0 100 100"><use href="#gb77c"/></svg><svg class="hg" viewBox="0 0 100 100"><use href="#gb0b4"/></svg><svg class="hg" viewBox="0 0 100 100"><use href="#gae30"/></svg></div>
<div class="t rb" style="left:85px;top:98px"><span class="kt">복사</span><svg class="hg" viewBox="0 0 100 100"><use href="#gbcf5"/></svg><svg class="hg" viewBox="0 0 100 100"><use href="#gc0ac"/></svg></div>
<div class="chev" style="left:118px;top:100px"></div>
<div class="t rb" style="left:85px;top:123px"><span class="kt">서식</span><svg class="hg" viewBox="0 0 100 100"><use href="#gc11c"/></svg><svg class="hg" viewBox="0 0 100 100"><use href="#gc2dd"/></svg> <span class="kt">복사</span><svg class="hg" viewBox="0 0 100 100"><use href="#gbcf5"/></svg><svg class="hg" viewBox="0 0 100 100"><use href="#gc0ac"/></svg></div>
<div class="t gl" style="left:43px"><span class="kt">클립보드</span><svg class="hg" viewBox="0 0 100 100"><use href="#gd074"/></svg><svg class="hg" viewBox="0 0 100 100"><use href="#gb9bd"/></svg><svg class="hg" viewBox="0 0 100 100"><use href="#gbcf4"/></svg><svg class="hg" viewBox="0 0 100 100"><use href="#gb4dc"/></svg></div>
<svg class="a" style="left:139px;top:150px" width="9" height="9" fill="none" stroke="#555" stroke-width="1"><path d="M0.5 8V0.5H8 M2.5 2.5L8 8 M4.5 8H8V4.5"/></svg>
<div class="sep" style="left:150px;top:69px;height:89px"></div>
<!-- font -->
<div class="a" style="left:159px;top:77px;width:173px;height:23px;background:#fff;border:1px solid #c8c6c4"></div>
<div class="t rb" style="left:163px;top:82px;color:#222"><span class="kt">맑은</span><svg class="hg" viewBox="0 0 100 100"><use href="#gb9d1"/></svg><svg class="hg" viewBox="0 0 100 100"><use href="#gc740"/></svg> <span class="kt">고딕</span><svg class="hg" viewBox="0 0 100 100"><use href="#gace0"/></svg><svg class="hg" viewBox="0 0 100 100"><use href="#gb515"/></svg></div>
<div class="chev" style="left:321px;top:84px"></div>
<div class="a" style="left:333px;top:77px;width:40px;height:23px;background:#fff;border:1px solid #c8c6c4"></div>
<div class="t rb" style="left:337px;top:83px;color:#222">11</div>
<div class="chev" style="left:363px;top:84px"></div>
<div class="t rb" style="left:378px;top:83px"><span class="kt">가</span><svg class="hg" viewBox="0 0 100 100"><use href="#gac00"/></svg></div>
<svg class="a" style="left:388px;top:79px" width="8" height="6" fill="none" stroke="#2b88d8" stroke-width="1.2"><path d="M1 4.5L4 1.5L7 4.5"/></svg>
<div class="t rb" style="left:403px;top:83px;font-size:11px"><span class="kt">가</span><svg class="hg" viewBox="0 0 100 100"><use href="#gac00"/></svg></div>
<svg class="a" style="left:412px;top:79px" width="8" height="6" fill="none" stroke="#2b88d8" stroke-width="1.2"><path d="M1 1.5L4 4.5L7 1.5"/></svg>
<div class="t rb" style="left:165px;top:113px;--sw:12;color:#222"><span class="kt">가</span><svg class="hg" viewBox="0 0 100 100"><use href="#gac00"/></svg></div>
<div class="t rb" style="left:189px;top:113px;transform:skewX(-14deg);color:#444"><span class="kt">가</span><svg class="hg" viewBox="0 0 100 100"><use href="#gac00"/></svg></div>
<div class="a" style="left:207px;top:109px;width:37px;height:23px;background:#c8c6c4;border:1px solid #a19f9d"></div>
<div class="t rb" style="left:212px;top:113px;color:#444"><span class="kt">가</span><svg class="hg" viewBox="0 0 100 100"><use href="#gac00"/></svg></div><div class="a" style="left:212px;top:127px;width:11px;height:1px;background:#444"></div>
<div class="chev" style="left:232px;top:115px"></div>
<div class="sep" style="left:248px;top:111px;height:19px"></div>
<svg class="a" style="left:255px;top:111px" width="18" height="18" fill="none" stroke="#333" stroke-width="1">
 <path d="M1.5 1V14 M15.5 1V14 M8.5 1V14 M1 1.5H16 M1 8.5H16" stroke-dasharray="1 1"/>
 <path d="M1 15.5H16"/>
</svg>
<div class="chev" style="left:278px;top:115px"></div>
<div class="sep" style="left:294px;top:111px;height:19px"></div>
<svg class="a" style="left:301px;top:109px" width="20" height="20" fill="none" stroke="#333" stroke-width="1">
 <path d="M5 4L11 10L7 13L2 9Z"/><path d="M12 6C14 7 14 9 13 11" stroke="#2b88d8" stroke-width="1.5"/>
 <rect x="1" y="15" width="16" height="4" fill="#ffff00" stroke="none"/>
</svg>
<div class="chev" style="left:324px;top:115px"></div>
<div class="t rb" style="left:342px;top:110px;font-size:13px;--sw:11;color:#222"><span class="kt">가</span><svg class="hg" viewBox="0 0 100 100"><use href="#gac00"/></svg></div>
<div class="a" style="left:341px;top:124px;width:16px;height:4px;background:#ff0000"></div>
<div class="chev" style="left:363px;top:115px"></div>
<div class="sep" style="left:379px;top:111px;height:19px"></div>
<div class="t" style="left:387px;top:111px;font-size:7.5px;color:#777;--sw:10"><span class="kt">내천</span><svg class="hg" viewBox="0 0 100 100"><use href="#gb0b4"/></svg><svg class="hg" viewBox="0 0 100 100"><use href="#gcc9c"/></svg></div>
<svg class="a" style="left:393px;top:119px" width="10" height="10" fill="none" stroke="#2b88d8" stroke-width="1"><path d="M2.5 1.5V8 M5.5 1.5V9 M8.5 1.5V9"/></svg>
<div class="chev" style="left:409px;top:115px"></div>
<div class="t gl" style="left:269px"><span class="kt">글꼴</span><svg class="hg" viewBox="0 0 100 100"><use href="#gae00"/></svg><svg class="hg" viewBox="0 0 100 100"><use href="#gaf34"/></svg></div>
<svg class="a" style="left:417px;top:150px" width="9" height="9" fill="none" stroke="#555" stroke-width="1"><path d="M0.5 8V0.5H8 M2.5 2.5L8 8 M4.5 8H8V4.5"/></svg>
<div class="sep" style="left:428px;top:69px;height:89px"></div>
<!-- alignment -->
<div class="a" style="left:437px;top:77px;width:22px;height:23px;background:#e1dfdd"></div>
<div class="a" style="left:461px;top:77px;width:22px;height:23px;background:#c8c6c4;border:1px solid #a19f9d"></div>
<svg class="a" style="left:436px;top:76px" width="130" height="56" fill="none" stroke="#333" stroke-width="1">
 <path d="M5 5.5H18 M7 9.5H16 M5 13.5H18"/>
 <path d="M29 7.5H42 M31 11.5H40 M29 15.5H42"/>
 <path d="M53 12.5H66 M55 16.5H64 M53 20.5H66"/>
 <path d="M5 37.5H18 M5 41.5H14 M5 45.5H18 M5 49.5H14"/>
 <path d="M29 37.5H42 M31 41.5H40 M29 45.5H42 M31 49.5H40"/>
 <path d="M53 37.5H66 M57 41.5H66 M53 45.5H66 M57 49.5H66"/>
 <path d="M90 37.5H98 M90 49.5H98 M90 41.5H98 M90 45.5H98" />
 <path d="M84 43.5H92 M86.5 41L84 43.5L86.5 46" stroke="#2b88d8"/>
 <path d="M114 37.5H122 M114 49.5H122 M114 41.5H122 M114 45.5H122"/>
 <path d="M107 43.5H114 M111.5 41L114 43.5L111.5 46" stroke="#2b88d8"/>
 <path d="M88 24L99 12 M95 12H99V16" stroke="#2b88d8" stroke-width="1.3"/>
</svg>
<div class="sep" style="left:511px;top:78px;height:21px"></div>
<div class="sep" style="left:511px;top:110px;height:21px"></div>
<div class="chev" style="left:540px;top:84px"></div><div class="t" style="left:518px;top:81px;font-size:7px;color:#333;--sw:11;transform:rotate(-40deg)"><span class="kt">가나</span><svg class="hg" viewBox="0 0 100 100"><use href="#gac00"/></svg><svg class="hg" viewBox="0 0 100 100"><use href="#gb098"/></svg></div>
<div class="sep" style="left:566px;top:75px;height:58px"></div>
<svg class="a" style="left:573px;top:77px" width="20" height="20" fill="none" stroke="#333" stroke-width="1">
 <path d="M10 15H15C17 15 17 9 14 9" stroke="#2b88d8" stroke-width="1.2"/><path d="M12 13L10 15L12 17" stroke="#2b88d8" stroke-width="1.2"/>
</svg>
<div class="t rb" style="left:594px;top:82px"><span class="kt">자동</span><svg class="hg" viewBox="0 0 100 100"><use href="#gc790"/></svg><svg class="hg" viewBox="0 0 100 100"><use href="#gb3d9"/></svg> <span class="kt">줄</span><svg class="hg" viewBox="0 0 100 100"><use href="#gc904"/></svg> <span class="kt">바꿈</span><svg class="hg" viewBox="0 0 100 100"><use href="#gbc14"/></svg><svg class="hg" viewBox="0 0 100 100"><use href="#gafc8"/></svg></div><div class="t" style="left:574px;top:78px;font-size:7.5px;color:#333;--sw:11"><span class="kt">가나</span><svg class="hg" viewBox="0 0 100 100"><use href="#gac00"/></svg><svg class="hg" viewBox="0 0 100 100"><use href="#gb098"/></svg></div><div class="t" style="left:574px;top:86px;font-size:7.5px;color:#333;--sw:11"><span class="kt">다</span><svg class="hg" viewBox="0 0 100 100"><use href="#gb2e4"/></svg></div>
<svg class="a" style="left:573px;top:110px" width="18" height="18" fill="none" stroke="#333" stroke-width="1">
 <path d="M1.5 1.5H15.5V16.5H1.5Z M1.5 5.5H15.5 M1.5 12.5H15.5 M8.5 1.5V5.5 M8.5 12.5V16.5"/>
 <path d="M3 9H14 M5 7L3 9L5 11 M12 7L14 9L12 11" stroke="#2b88d8"/>
 <path d="M1.5 5.5H15.5V12.5H1.5Z" stroke="#2b88d8"/>
</svg>
<div class="t rb" style="left:594px;top:113px"><span class="kt">병합하고</span><svg class="hg" viewBox="0 0 100 100"><use href="#gbcd1"/></svg><svg class="hg" viewBox="0 0 100 100"><use href="#gd569"/></svg><svg class="hg" viewBox="0 0 100 100"><use href="#gd558"/></svg><svg class="hg" viewBox="0 0 100 100"><use href="#gace0"/></svg> <span class="kt">가운데</span><svg class="hg" viewBox="0 0 100 100"><use href="#gac00"/></svg><svg class="hg" viewBox="0 0 100 100"><use href="#gc6b4"/></svg><svg class="hg" viewBox="0 0 100 100"><use href="#gb370"/></svg> <span class="kt">맞춤</span><svg class="hg" viewBox="0 0 100 100"><use href="#gb9de"/></svg><svg class="hg" viewBox="0 0 100 100"><use href="#gcda4"/></svg></div>
<div class="chev" style="left:719px;top:115px"></div>
<div class="t gl" style="left:565px"><span class="kt">맞춤</span><svg class="hg" viewBox="0 0 100 100"><use href="#gb9de"/></svg><svg class="hg" viewBox="0 0 100 100"><use href="#gcda4"/></svg></div>
<svg class="a" style="left:728px;top:150px" width="9" height="9" fill="none" stroke="#555" stroke-width="1"><path d="M0.5 8V0.5H8 M2.5 2.5L8 8 M4.5 8H8V4.5"/></svg>
<div class="sep" style="left:740px;top:69px;height:89px"></div>
<!-- number -->
<div class="a" style="left:748px;top:77px;width:140px;height:23px;background:#fff;border:1px solid #c8c6c4"></div>
<div class="t rb" style="left:752px;top:82px;color:#222"><span class="kt">일반</span><svg class="hg" viewBox="0 0 100 100"><use href="#gc77c"/></svg><svg class="hg" viewBox="0 0 100 100"><use href="#gbc18"/></svg></div>
<div class="chev" style="left:878px;top:84px"></div>
<svg class="a" style="left:749px;top:110px" width="140" height="20" fill="none" stroke="#333" stroke-width="1">
 <path d="M1.5 3.5H15.5V12.5H1.5Z" stroke-width="1.2"/><path d="M6 6C4.5 6 4.5 10 6 10 M9 6C7.5 6 7.5 10 9 10" stroke-width="1"/>
 <path d="M11.5 9.5C11.5 7.5 18.5 7.5 18.5 9.5V16.5C18.5 18.5 11.5 18.5 11.5 16.5Z" fill="#fff" stroke="#d86613" stroke-width="1.3"/>
 <path d="M11.5 12C11.5 14 18.5 14 18.5 12 M11.5 14.5C11.5 16.5 18.5 16.5 18.5 14.5" stroke="#d86613" stroke-width="1.1"/>
 <path d="M54.5 2.5L44.5 17.5" stroke-width="1.1"/><circle cx="44.5" cy="5" r="2.6" stroke-width="1.1"/><circle cx="54.5" cy="15" r="2.6" stroke-width="1.1"/>
 <circle cx="73" cy="7.5" r="3.2" fill="#333" stroke="none"/><path d="M75.6 8C76.5 12 74.5 15 70.5 16.5" stroke-width="2"/>
 <path d="M88.5 1V19" stroke="#c8c6c4"/>
 <path d="M95 7H104 M98.5 3.5L95 7L98.5 10.5" stroke="#2b88d8" stroke-width="1.2"/>
 <text x="104" y="10" font-size="10" fill="#333" stroke="none">0</text>
 <text x="97" y="18.5" font-size="10" fill="#333" stroke="none">.00</text>
 <text x="120" y="9" font-size="10" fill="#333" stroke="none">.00</text>
 <path d="M119 14H128 M124.5 10.5L128 14L124.5 17.5" stroke="#2b88d8" stroke-width="1.2"/>
 <text x="126" y="18.5" font-size="10" fill="#333" stroke="none">.0</text>
</svg>
<div class="chev" style="left:774px;top:115px"></div>
<div class="t gl" style="left:783px"><span class="kt">표시</span><svg class="hg" viewBox="0 0 100 100"><use href="#gd45c"/></svg><svg class="hg" viewBox="0 0 100 100"><use href="#gc2dc"/></svg> <span class="kt">형식</span><svg class="hg" viewBox="0 0 100 100"><use href="#gd615"/></svg><svg class="hg" viewBox="0 0 100 100"><use href="#gc2dd"/></svg></div>
<svg class="a" style="left:884px;top:150px" width="9" height="9" fill="none" stroke="#555" stroke-width="1"><path d="M0.5 8V0.5H8 M2.5 2.5L8 8 M4.5 8H8V4.5"/></svg>
<div class="sep" style="left:895px;top:69px;height:89px"></div>
<!-- styles -->
<svg class="a" style="left:910px;top:75px" width="125" height="30" fill="none" stroke="#333" stroke-width="1">
 <rect x="6.5" y="1.5" width="12" height="7" fill="#f4a0a8" stroke="#e0323a"/>
 <rect x="6.5" y="15.5" width="14.5" height="7" fill="#f4a0a8" stroke="#e0323a"/>
 <rect x="6.5" y="8.5" width="8" height="7" fill="#7ab4ea" stroke="#1a73c8"/>
 <path d="M1.5 1.5H28.5V22.5H1.5Z M1.5 8.5H6.5 M1.5 15.5H6.5 M18.5 8.5H28.5 M21 15.5H28.5 M6.5 1.5V22.5 M20.5 1.5V15.5 M24 1.5V22.5" />
 <rect x="52.5" y="8.5" width="18.5" height="14" fill="#7ab4ea" stroke="#1a73c8"/>
 <path d="M43.5 1.5H71V22.5H43.5Z M43.5 8.5H52.5 M43.5 15.5H52.5 M52.5 1.5V22.5 M62 1.5V8.5 M71 1.5V8.5 M52.5 8.5H71"/>
 <path d="M72 9L58 23" stroke="#333" stroke-width="3.6" stroke-linecap="round"/>
 <path d="M72 9L58 23" stroke="#fff" stroke-width="1.6" stroke-linecap="round"/>
 <path d="M57 21.5C54 21.5 53.5 25.5 50.5 26.5C55 27.5 60 26 59.5 23Z" fill="#7ab4ea" stroke="#1a73c8"/>
 <rect x="95.5" y="6" width="17.5" height="11.5" fill="#7ab4ea" stroke="#1a73c8"/>
 <path d="M90.5 1.5H117.5V22.5H90.5Z M90.5 6H95.5 M90.5 17.5H95.5 M95.5 1.5V22.5 M113 1.5V6 M113 17.5V22.5"/>
 <path d="M119 9L105 23" stroke="#333" stroke-width="3.6" stroke-linecap="round"/>
 <path d="M119 9L105 23" stroke="#fff" stroke-width="1.6" stroke-linecap="round"/>
 <path d="M104 21.5C101 21.5 100.5 25.5 97.5 26.5C102 27.5 107 26 106.5 23Z" fill="#7ab4ea" stroke="#1a73c8"/>
</svg>
<div class="t rb" style="left:907px;top:107px"><span class="kt">조건부</span><svg class="hg" viewBox="0 0 100 100"><use href="#gc870"/></svg><svg class="hg" viewBox="0 0 100 100"><use href="#gac74"/></svg><svg class="hg" viewBox="0 0 100 100"><use href="#gbd80"/></svg></div>
<div class="t rb" style="left:907px;top:124px"><span class="kt">서식</span><svg class="hg" viewBox="0 0 100 100"><use href="#gc11c"/></svg><svg class="hg" viewBox="0 0 100 100"><use href="#gc2dd"/></svg></div>
<div class="chev" style="left:935px;top:125px"></div>
<div class="t rb" style="left:960px;top:107px"><span class="kt">표</span><svg class="hg" viewBox="0 0 100 100"><use href="#gd45c"/></svg></div>
<div class="t rb" style="left:950px;top:124px"><span class="kt">서식</span><svg class="hg" viewBox="0 0 100 100"><use href="#gc11c"/></svg><svg class="hg" viewBox="0 0 100 100"><use href="#gc2dd"/></svg></div>
<div class="chev" style="left:978px;top:125px"></div>
<div class="t rb" style="left:1008px;top:107px"><span class="kt">셀</span><svg class="hg" viewBox="0 0 100 100"><use href="#gc140"/></svg></div>
<div class="t rb" style="left:991px;top:124px"><span class="kt">스타일</span><svg class="hg" viewBox="0 0 100 100"><use href="#gc2a4"/></svg><svg class="hg" viewBox="0 0 100 100"><use href="#gd0c0"/></svg><svg class="hg" viewBox="0 0 100 100"><use href="#gc77c"/></svg></div>
<div class="chev" style="left:1030px;top:125px"></div>
<div class="t gl" style="left:955px"><span class="kt">스타일</span><svg class="hg" viewBox="0 0 100 100"><use href="#gc2a4"/></svg><svg class="hg" viewBox="0 0 100 100"><use href="#gd0c0"/></svg><svg class="hg" viewBox="0 0 100 100"><use href="#gc77c"/></svg></div>
<div class="sep" style="left:1048px;top:69px;height:89px"></div>
<!-- cells -->
<svg class="a" style="left:1060px;top:70px" width="120" height="30" fill="none" stroke="#333" stroke-width="1">
 <rect x="11" y="12" width="23" height="8" fill="#7fb5e8" stroke="#2b88d8"/>
 <path d="M2.5 5.5H31.5V26.5H2.5Z M2.5 12H31.5 M2.5 20H31.5 M11.5 5.5V26.5 M20.5 5.5V26.5"/>
 <path d="M1 16H12 M5 12L1 16L5 20" stroke="#2b88d8" stroke-width="1.3"/>
 <rect x="50" y="12" width="18" height="8" fill="#7fb5e8" stroke="#2b88d8"/>
 <path d="M46.5 5.5H75.5V26.5H46.5Z M46.5 12H75.5 M46.5 20H75.5 M55.5 5.5V26.5 M64.5 5.5V26.5"/>
 <path d="M67 10L76 22 M76 10L67 22" stroke="#e0323a" stroke-width="1.2"/>
 <rect x="97" y="12" width="18" height="8" fill="#7fb5e8" stroke="#2b88d8"/>
 <path d="M88.5 5.5H116.5V26.5H88.5Z M88.5 12H116.5 M88.5 20H116.5 M97.5 5.5V26.5 M107.5 5.5V26.5"/>
 <path d="M96 2.5H110 M96.5 0.5V4.5 M109.5 0.5V4.5" stroke="#2b88d8"/>
</svg>
<div class="t rb" style="left:1066px;top:108px"><span class="kt">삽입</span><svg class="hg" viewBox="0 0 100 100"><use href="#gc0bd"/></svg><svg class="hg" viewBox="0 0 100 100"><use href="#gc785"/></svg></div>
<div class="chev" style="left:1076px;top:123px"></div>
<div class="t rb" style="left:1108px;top:108px"><span class="kt">삭제</span><svg class="hg" viewBox="0 0 100 100"><use href="#gc0ad"/></svg><svg class="hg" viewBox="0 0 100 100"><use href="#gc81c"/></svg></div>
<div class="chev" style="left:1118px;top:123px"></div>
<div class="t rb" style="left:1150px;top:108px"><span class="kt">서식</span><svg class="hg" viewBox="0 0 100 100"><use href="#gc11c"/></svg><svg class="hg" viewBox="0 0 100 100"><use href="#gc2dd"/></svg></div>
<div class="chev" style="left:1160px;top:123px"></div>
<div class="t gl" style="left:1113px"><span class="kt">셀</span><svg class="hg" viewBox="0 0 100 100"><use href="#gc140"/></svg></div>
<div class="sep" style="left:1190px;top:69px;height:89px"></div>
<!-- editing -->
<svg class="a" style="left:1200px;top:70px" width="20" height="66" fill="none" stroke="#333" stroke-width="1">
 <path d="M16 2.5H4L10 9L4 15.5H16"/>
 <path d="M2.5 25.5H17.5V38.5H2.5Z M2.5 28.5H17.5"/>
 <path d="M10 30V36 M7.5 33.5L10 36L12.5 33.5" stroke="#2b88d8" stroke-width="1.2"/>
 <path d="M2 55L10 48L17 55L9 62Z" fill="#fff" stroke="#8a2da5" stroke-width="1.3"/>
 <path d="M2 55L6 51.5L13 58.5L9 62Z" fill="#c774d9" stroke="#8a2da5" stroke-width="1.3"/>
</svg>
<div class="t rb" style="left:1221px;top:73px"><span class="kt">자동</span><svg class="hg" viewBox="0 0 100 100"><use href="#gc790"/></svg><svg class="hg" viewBox="0 0 100 100"><use href="#gb3d9"/></svg> <span class="kt">합계</span><svg class="hg" viewBox="0 0 100 100"><use href="#gd569"/></svg><svg class="hg" viewBox="0 0 100 100"><use href="#gacc4"/></svg></div>
<div class="chev" style="left:1283px;top:75px"></div>
<div class="t rb" style="left:1221px;top:96px"><span class="kt">채우기</span><svg class="hg" viewBox="0 0 100 100"><use href="#gcc44"/></svg><svg class="hg" viewBox="0 0 100 100"><use href="#gc6b0"/></svg><svg class="hg" viewBox="0 0 100 100"><use href="#gae30"/></svg></div>
<div class="chev" style="left:1262px;top:98px"></div>
<div class="t rb" style="left:1221px;top:120px"><span class="kt">지우기</span><svg class="hg" viewBox="0 0 100 100"><use href="#gc9c0"/></svg><svg class="hg" viewBox="0 0 100 100"><use href="#gc6b0"/></svg><svg class="hg" viewBox="0 0 100 100"><use href="#gae30"/></svg></div>
<div class="chev" style="left:1262px;top:121px"></div>
<svg class="a" style="left:1300px;top:70px" width="85" height="35" fill="none" stroke="#333" stroke-width="1.2">
 <path d="M3.5 6H11V13" stroke="#2b88d8"/>
 <path d="M9 15V17 M5.5 18H12.5" stroke-width="1.2"/><ellipse cx="9" cy="22.5" rx="3.5" ry="2.5" stroke-width="1.2"/>
 <path d="M16 9.5H31L25.5 17V26H21.5V17Z" stroke-width="1.2"/>
 <circle cx="67" cy="13.5" r="10" stroke-width="1.2" fill="#fafafa"/>
 <path d="M60 21L48 32" stroke-width="1.2"/>
</svg>
<div class="t rb" style="left:1298px;top:108px"><span class="kt">정렬</span><svg class="hg" viewBox="0 0 100 100"><use href="#gc815"/></svg><svg class="hg" viewBox="0 0 100 100"><use href="#gb82c"/></svg> <span class="kt">및</span><svg class="hg" viewBox="0 0 100 100"><use href="#gbc0f"/></svg></div>
<div class="t rb" style="left:1301px;top:124px"><span class="kt">필터</span><svg class="hg" viewBox="0 0 100 100"><use href="#gd544"/></svg><svg class="hg" viewBox="0 0 100 100"><use href="#gd130"/></svg></div>
<div class="chev" style="left:1330px;top:125px"></div>
<div class="t rb" style="left:1343px;top:108px"><span class="kt">찾기</span><svg class="hg" viewBox="0 0 100 100"><use href="#gcc3e"/></svg><svg class="hg" viewBox="0 0 100 100"><use href="#gae30"/></svg> <span class="kt">및</span><svg class="hg" viewBox="0 0 100 100"><use href="#gbc0f"/></svg></div>
<div class="t rb" style="left:1348px;top:124px"><span class="kt">선택</span><svg class="hg" viewBox="0 0 100 100"><use href="#gc120"/></svg><svg class="hg" viewBox="0 0 100 100"><use href="#gd0dd"/></svg></div>
<div class="chev" style="left:1374px;top:125px"></div>
<div class="t gl" style="left:1281px"><span class="kt">편집</span><svg class="hg" viewBox="0 0 100 100"><use href="#gd3b8"/></svg><svg class="hg" viewBox="0 0 100 100"><use href="#gc9d1"/></svg></div>
<div class="sep" style="left:1393px;top:69px;height:89px"></div>
<svg class="a" style="left:1428px;top:150px" width="14" height="10" fill="none" stroke="#444" stroke-width="1.2"><path d="M2 8L6.5 3.5L11 8"/></svg>
<!--GRID-->
<div class="a" style="left:0;top:167px;width:1449px;height:110px;background:#e6e6e6"></div>
<div class="a" style="left:6px;top:173px;width:102px;height:28px;background:#fff;border:1px solid #c6c6c6"></div>
<div class="t" style="left:13px;top:181px;font-size:13px;color:#222">J7</div>
<svg class="a" style="left:92px;top:183px" width="12" height="8"><path d="M1.5 1.5H9.5L5.5 6Z" fill="#666"/></svg>
<svg class="a" style="left:121px;top:180px" width="4" height="14" fill="#a0a0a0"><rect x="0.5" y="1" width="2" height="2"/><rect x="0.5" y="6" width="2" height="2"/><rect x="0.5" y="11" width="2" height="2"/></svg>
<div class="a" style="left:138px;top:173px;width:110px;height:28px;background:#fff;border:1px solid #c6c6c6"></div>
<svg class="a" style="left:148px;top:178px" width="100" height="20" fill="none" stroke="#bdbdbd" stroke-width="1.3"><path d="M5 4L14 13 M14 4L5 13"/><path d="M38 9L42 13L50 4" stroke-width="2"/></svg>
<div class="t" style="left:222px;top:178px;font-family:'Liberation Serif';font-style:italic;font-weight:bold;font-size:14px;color:#555">f<span style="font-size:11px">x</span></div>
<div class="a" style="left:251px;top:173px;width:1192px;height:72px;background:#fff;border:1px solid #c6c6c6"></div>
<div class="t" style="left:264px;top:179px;font-size:14px;color:#222"><span class="kt">키워드</span><svg class="hg" viewBox="0 0 100 100"><use href="#gd0a4"/></svg><svg class="hg" viewBox="0 0 100 100"><use href="#gc6cc"/></svg><svg class="hg" viewBox="0 0 100 100"><use href="#gb4dc"/></svg>3</div>
<svg class="a" style="left:1428px;top:180px" width="14" height="10" fill="none" stroke="#555" stroke-width="1.6"><path d="M2.5 7.5L6.5 3.5L10.5 7.5"/></svg>
<div class="a" style="left:954px;top:255px;width:123px;height:22px;background:#d2d2d2"></div>
<svg class="a" style="left:14px;top:257px" width="20" height="18"><path d="M17 2V16H3Z" fill="#b4b4b4"/></svg>
<div class="a" style="left:34px;top:255px;width:1px;height:21px;background:linear-gradient(#d0d0d0,#a8a8a8)"></div>
<div class="a" style="left:104px;top:255px;width:1px;height:21px;background:linear-gradient(#d0d0d0,#a8a8a8)"></div>
<div class="a" style="left:174px;top:255px;width:1px;height:21px;background:linear-gradient(#d0d0d0,#a8a8a8)"></div>
<div class="a" style="left:264px;top:255px;width:1px;height:21px;background:linear-gradient(#d0d0d0,#a8a8a8)"></div>
<div class="a" style="left:358px;top:255px;width:1px;height:21px;background:linear-gradient(#d0d0d0,#a8a8a8)"></div>
<div class="a" style="left:452px;top:255px;width:1px;height:21px;background:linear-gradient(#d0d0d0,#a8a8a8)"></div>
<div class="a" style="left:546px;top:255px;width:1px;height:21px;background:linear-gradient(#d0d0d0,#a8a8a8)"></div>
<div class="a" style="left:668px;top:255px;width:1px;height:21px;background:linear-gradient(#d0d0d0,#a8a8a8)"></div>
<div class="a" style="left:832px;top:255px;width:1px;height:21px;background:linear-gradient(#d0d0d0,#a8a8a8)"></div>
<div class="a" style="left:954px;top:255px;width:1px;height:21px;background:linear-gradient(#d0d0d0,#a8a8a8)"></div>
<div class="a" style="left:1076px;top:255px;width:1px;height:21px;background:linear-gradient(#d0d0d0,#a8a8a8)"></div>
<div class="a" style="left:1285px;top:255px;width:1px;height:21px;background:linear-gradient(#d0d0d0,#a8a8a8)"></div>
<div class="a" style="left:1380px;top:255px;width:1px;height:21px;background:linear-gradient(#d0d0d0,#a8a8a8)"></div>
<div class="ch" style="left:35px;width:69px">A</div>
<div class="ch" style="left:105px;width:69px">B</div>
<div class="ch" style="left:175px;width:89px">C</div>
<div class="ch" style="left:265px;width:93px">D</div>
<div class="ch" style="left:359px;width:93px">E</div>
<div class="ch" style="left:453px;width:93px">F</div>
<div class="ch" style="left:547px;width:121px">G</div>
<div class="ch" style="left:669px;width:163px">H</div>
<div class="ch" style="left:833px;width:121px">I</div>
<div class="ch" style="left:955px;width:121px">J</div>
<div class="ch" style="left:1077px;width:208px">K</div>
<div class="ch" style="left:1286px;width:94px">L</div>
<div class="ch" style="left:1381px;width:69px">M</div>
<div class="a" style="left:0;top:276px;width:1427px;height:1px;background:#ababab"></div>
<div class="a" style="left:954px;top:275px;width:123px;height:2px;background:#217346"></div>
<div class="a" style="left:35px;top:277px;width:1391px;height:344px;background:#fff"></div>
<div class="a" style="left:0;top:277px;width:34px;height:344px;background:#e6e6e6"></div>
<div class="a" style="left:0;top:437px;width:34px;height:21px;background:#d2d2d2"></div>
<div class="a" style="left:34px;top:277px;width:1px;height:344px;background:#ababab"></div>
<div class="a" style="left:33px;top:437px;width:2px;height:21px;background:#217346"></div>
<div class="a" style="left:0;top:324px;width:34px;height:1px;background:#c6c6c6"></div>
<div class="a" style="left:35px;top:324px;width:1391px;height:1px;background:#dadada"></div>
<div class="a" style="left:0;top:347px;width:34px;height:1px;background:#c6c6c6"></div>
<div class="a" style="left:35px;top:347px;width:1391px;height:1px;background:#dadada"></div>
<div class="a" style="left:0;top:370px;width:34px;height:1px;background:#c6c6c6"></div>
<div class="a" style="left:35px;top:370px;width:1391px;height:1px;background:#dadada"></div>
<div class="a" style="left:0;top:392px;width:34px;height:1px;background:#c6c6c6"></div>
<div class="a" style="left:35px;top:392px;width:1391px;height:1px;background:#dadada"></div>
<div class="a" style="left:0;top:414px;width:34px;height:1px;background:#c6c6c6"></div>
<div class="a" style="left:35px;top:414px;width:1391px;height:1px;background:#dadada"></div>
<div class="a" style="left:0;top:436px;width:34px;height:1px;background:#c6c6c6"></div>
<div class="a" style="left:35px;top:436px;width:1391px;height:1px;background:#dadada"></div>
<div class="a" style="left:0;top:458px;width:34px;height:1px;background:#c6c6c6"></div>
<div class="a" style="left:35px;top:458px;width:1391px;height:1px;background:#dadada"></div>
<div class="a" style="left:0;top:480px;width:34px;height:1px;background:#c6c6c6"></div>
<div class="a" style="left:35px;top:480px;width:1391px;height:1px;background:#dadada"></div>
<div class="a" style="left:0;top:502px;width:34px;height:1px;background:#c6c6c6"></div>
<div class="a" style="left:35px;top:502px;width:1391px;height:1px;background:#dadada"></div>
<div class="a" style="left:0;top:524px;width:34px;height:1px;background:#c6c6c6"></div>
<div class="a" style="left:35px;top:524px;width:1391px;height:1px;background:#dadada"></div>
<div class="a" style="left:0;top:546px;width:34px;height:1px;background:#c6c6c6"></div>
<div class="a" style="left:35px;top:546px;width:1391px;height:1px;background:#dadada"></div>
<div class="a" style="left:0;top:568px;width:34px;height:1px;background:#c6c6c6"></div>
<div class="a" style="left:35px;top:568px;width:1391px;height:1px;background:#dadada"></div>
<div class="a" style="left:0;top:590px;width:34px;height:1px;background:#c6c6c6"></div>
<div class="a" style="left:35px;top:590px;width:1391px;height:1px;background:#dadada"></div>
<div class="a" style="left:0;top:612px;width:34px;height:1px;background:#c6c6c6"></div>
<div class="a" style="left:35px;top:612px;width:1391px;height:1px;background:#dadada"></div>
<div class="a" style="left:104px;top:277px;width:1px;height:344px;background:#dadada"></div>
<div class="a" style="left:174px;top:277px;width:1px;height:344px;background:#dadada"></div>
<div class="a" style="left:264px;top:277px;width:1px;height:344px;background:#dadada"></div>
<div class="a" style="left:358px;top:277px;width:1px;height:344px;background:#dadada"></div>
<div class="a" style="left:452px;top:277px;width:1px;height:344px;background:#dadada"></div>
<div class="a" style="left:546px;top:277px;width:1px;height:344px;background:#dadada"></div>
<div class="a" style="left:668px;top:277px;width:1px;height:344px;background:#dadada"></div>
<div class="a" style="left:832px;top:277px;width:1px;height:344px;background:#dadada"></div>
<div class="a" style="left:954px;top:277px;width:1px;height:344px;background:#dadada"></div>
<div class="a" style="left:1076px;top:277px;width:1px;height:344px;background:#dadada"></div>
<div class="a" style="left:1285px;top:277px;width:1px;height:344px;background:#dadada"></div>
<div class="a" style="left:1380px;top:277px;width:1px;height:344px;background:#dadada"></div>
<div class="a" style="left:1426px;top:255px;width:1px;height:367px;background:#ababab"></div>
<div class="t" style="left:0;top:308px;width:34px;text-align:center;font-size:13px;color:#222">1</div>
<div class="t" style="left:0;top:331px;width:34px;text-align:center;font-size:13px;color:#222">2</div>
<div class="t" style="left:0;top:354px;width:34px;text-align:center;font-size:13px;color:#222">3</div>
<div class="t" style="left:0;top:376px;width:34px;text-align:center;font-size:13px;color:#222">4</div>
<div class="t" style="left:0;top:398px;width:34px;text-align:center;font-size:13px;color:#222">5</div>
<div class="t" style="left:0;top:420px;width:34px;text-align:center;font-size:13px;color:#222">6</div>
<div class="t" style="left:0;top:442px;width:34px;text-align:center;font-size:13px;color:#222">7</div>
<div class="t" style="left:0;top:464px;width:34px;text-align:center;font-size:13px;color:#222">8</div>
<div class="t" style="left:0;top:486px;width:34px;text-align:center;font-size:13px;color:#222">9</div>
<div class="t" style="left:0;top:508px;width:34px;text-align:center;font-size:13px;color:#222">10</div>
<div class="t" style="left:0;top:530px;width:34px;text-align:center;font-size:13px;color:#222">11</div>
<div class="t" style="left:0;top:552px;width:34px;text-align:center;font-size:13px;color:#222">12</div>
<div class="t" style="left:0;top:574px;width:34px;text-align:center;font-size:13px;color:#222">13</div>
<div class="t" style="left:0;top:596px;width:34px;text-align:center;font-size:13px;color:#222">14</div>
<div class="t" style="left:0;top:618px;width:34px;text-align:center;font-size:13px;color:#222">15</div>
<div class="a" style="left:668px;top:325px;width:1px;height:22px;background:#fff"></div>
<div class="a" style="left:954px;top:348px;width:1px;height:22px;background:#fff"></div>
<div class="a" style="left:35px;top:277px;width:418px;height:48px;background:#c6efce"></div>
<div class="a" style="left:453px;top:277px;width:93px;height:47px;background:#fff"></div>
<div class="a" style="left:546px;top:277px;width:531px;height:48px;background:#f2f2f2"></div>
<div class="a" style="left:35px;top:370px;width:1346px;height:23px;background:#fffbd1;border-top:1px solid #c3c3c3;border-bottom:1px solid #c3c3c3"></div>
<div class="a" style="left:104px;top:370px;width:1px;height:23px;background:#c3c3c3"></div>
<div class="a" style="left:174px;top:370px;width:1px;height:23px;background:#c3c3c3"></div>
<div class="a" style="left:264px;top:370px;width:1px;height:23px;background:#c3c3c3"></div>
<div class="a" style="left:358px;top:370px;width:1px;height:23px;background:#c3c3c3"></div>
<div class="a" style="left:452px;top:370px;width:1px;height:23px;background:#c3c3c3"></div>
<div class="a" style="left:546px;top:370px;width:1px;height:23px;background:#c3c3c3"></div>
<div class="a" style="left:668px;top:370px;width:1px;height:23px;background:#c3c3c3"></div>
<div class="a" style="left:832px;top:370px;width:1px;height:23px;background:#c3c3c3"></div>
<div class="a" style="left:954px;top:370px;width:1px;height:23px;background:#c3c3c3"></div>
<div class="a" style="left:1076px;top:370px;width:1px;height:23px;background:#c3c3c3"></div>
<div class="a" style="left:1285px;top:370px;width:1px;height:23px;background:#c3c3c3"></div>
<div class="cell" style="left:38px;top:294px;color:#006100"><span class="kt">광고발행모드</span><svg class="hg" viewBox="0 0 100 100"><use href="#gad11"/></svg><svg class="hg" viewBox="0 0 100 100"><use href="#gace0"/></svg><svg class="hg" viewBox="0 0 100 100"><use href="#gbc1c"/></svg><svg class="hg" viewBox="0 0 100 100"><use href="#gd589"/></svg><svg class="hg" viewBox="0 0 100 100"><use href="#gbaa8"/></svg><svg class="hg" viewBox="0 0 100 100"><use href="#gb4dc"/></svg></div>
<div class="t" style="left:250px;top:283px;font-size:32px;font-weight:bold;color:#fb7d00;--sw:11.5;word-spacing:2px">content<span class="kt">폴더</span><svg class="hg" viewBox="0 0 100 100"><use href="#gd3f4"/></svg><svg class="hg" viewBox="0 0 100 100"><use href="#gb354"/></svg> <span class="kt">폴더별로</span><svg class="hg" viewBox="0 0 100 100"><use href="#gd3f4"/></svg><svg class="hg" viewBox="0 0 100 100"><use href="#gb354"/></svg><svg class="hg" viewBox="0 0 100 100"><use href="#gbcc4"/></svg><svg class="hg" viewBox="0 0 100 100"><use href="#gb85c"/></svg> <span class="kt">셋팅</span><svg class="hg" viewBox="0 0 100 100"><use href="#gc14b"/></svg><svg class="hg" viewBox="0 0 100 100"><use href="#gd305"/></svg> <span class="kt">후에</span><svg class="hg" viewBox="0 0 100 100"><use href="#gd6c4"/></svg><svg class="hg" viewBox="0 0 100 100"><use href="#gc5d0"/></svg> <span class="kt">작업폴더에</span><svg class="hg" viewBox="0 0 100 100"><use href="#gc791"/></svg><svg class="hg" viewBox="0 0 100 100"><use href="#gc5c5"/></svg><svg class="hg" viewBox="0 0 100 100"><use href="#gd3f4"/></svg><svg class="hg" viewBox="0 0 100 100"><use href="#gb354"/></svg><svg class="hg" viewBox="0 0 100 100"><use href="#gc5d0"/></svg> <span class="kt">입력</span><svg class="hg" viewBox="0 0 100 100"><use href="#gc785"/></svg><svg class="hg" viewBox="0 0 100 100"><use href="#gb825"/></svg></div>
<div class="cell " style="left:549px;top:328px;">content<span class="kt">폴더안에생성</span><svg class="hg" viewBox="0 0 100 100"><use href="#gd3f4"/></svg><svg class="hg" viewBox="0 0 100 100"><use href="#gb354"/></svg><svg class="hg" viewBox="0 0 100 100"><use href="#gc548"/></svg><svg class="hg" viewBox="0 0 100 100"><use href="#gc5d0"/></svg><svg class="hg" viewBox="0 0 100 100"><use href="#gc0dd"/></svg><svg class="hg" viewBox="0 0 100 100"><use href="#gc131"/></svg></div>
<div class="a" style="left:546px;top:348px;width:880px;height:14px;overflow:hidden">
<div class="cell" style="left:3px;top:4px"><span class="kt">원고발행시설정</span><svg class="hg" viewBox="0 0 100 100"><use href="#gc6d0"/></svg><svg class="hg" viewBox="0 0 100 100"><use href="#gace0"/></svg><svg class="hg" viewBox="0 0 100 100"><use href="#gbc1c"/></svg><svg class="hg" viewBox="0 0 100 100"><use href="#gd589"/></svg><svg class="hg" viewBox="0 0 100 100"><use href="#gc2dc"/></svg><svg class="hg" viewBox="0 0 100 100"><use href="#gc124"/></svg><svg class="hg" viewBox="0 0 100 100"><use href="#gc815"/></svg></div>
<div class="cell" style="left:125px;top:4px">ai<span class="kt">프롬프트설정</span><svg class="hg" viewBox="0 0 100 100"><use href="#gd504"/></svg><svg class="hg" viewBox="0 0 100 100"><use href="#gb86c"/></svg><svg class="hg" viewBox="0 0 100 100"><use href="#gd504"/></svg><svg class="hg" viewBox="0 0 100 100"><use href="#gd2b8"/></svg><svg class="hg" viewBox="0 0 100 100"><use href="#gc124"/></svg><svg class="hg" viewBox="0 0 100 100"><use href="#gc815"/></svg> <span class="kt">저장값</span><svg class="hg" viewBox="0 0 100 100"><use href="#gc800"/></svg><svg class="hg" viewBox="0 0 100 100"><use href="#gc7a5"/></svg><svg class="hg" viewBox="0 0 100 100"><use href="#gac12"/></svg></div>
<div class="cell" style="left:289px;top:4px"><span class="kt">이미지설정</span><svg class="hg" viewBox="0 0 100 100"><use href="#gc774"/></svg><svg class="hg" viewBox="0 0 100 100"><use href="#gbbf8"/></svg><svg class="hg" viewBox="0 0 100 100"><use href="#gc9c0"/></svg><svg class="hg" viewBox="0 0 100 100"><use href="#gc124"/></svg><svg class="hg" viewBox="0 0 100 100"><use href="#gc815"/></svg> <span class="kt">저장값</span><svg class="hg" viewBox="0 0 100 100"><use href="#gc800"/></svg><svg class="hg" viewBox="0 0 100 100"><use href="#gc7a5"/></svg><svg class="hg" viewBox="0 0 100 100"><use href="#gac12"/></svg></div>
<div class="cell" style="left:742px;top:4px">title<span class="kt">폴더</span><svg class="hg" viewBox="0 0 100 100"><use href="#gd3f4"/></svg><svg class="hg" viewBox="0 0 100 100"><use href="#gb354"/></svg></div>
</div>
<div class="cell " style="left:37px;top:375px;"><span class="kt">발행</span><svg class="hg" viewBox="0 0 100 100"><use href="#gbc1c"/></svg><svg class="hg" viewBox="0 0 100 100"><use href="#gd589"/></svg></div>
<div class="cell " style="left:107px;top:375px;"><span class="kt">시간</span><svg class="hg" viewBox="0 0 100 100"><use href="#gc2dc"/></svg><svg class="hg" viewBox="0 0 100 100"><use href="#gac04"/></svg></div>
<div class="cell " style="left:177px;top:375px;"><span class="kt">아이디</span><svg class="hg" viewBox="0 0 100 100"><use href="#gc544"/></svg><svg class="hg" viewBox="0 0 100 100"><use href="#gc774"/></svg><svg class="hg" viewBox="0 0 100 100"><use href="#gb514"/></svg></div>
<div class="cell " style="left:267px;top:375px;"><span class="kt">암호</span><svg class="hg" viewBox="0 0 100 100"><use href="#gc554"/></svg><svg class="hg" viewBox="0 0 100 100"><use href="#gd638"/></svg></div>
<div class="cell " style="left:361px;top:375px;"><span class="kt">아이피</span><svg class="hg" viewBox="0 0 100 100"><use href="#gc544"/></svg><svg class="hg" viewBox="0 0 100 100"><use href="#gc774"/></svg><svg class="hg" viewBox="0 0 100 100"><use href="#gd53c"/></svg></div>
<div class="cell " style="left:455px;top:375px;"><span class="kt">맥주소</span><svg class="hg" viewBox="0 0 100 100"><use href="#gb9e5"/></svg><svg class="hg" viewBox="0 0 100 100"><use href="#gc8fc"/></svg><svg class="hg" viewBox="0 0 100 100"><use href="#gc18c"/></svg></div>
<div class="cell " style="left:549px;top:375px;"><span class="kt">작업폴더</span><svg class="hg" viewBox="0 0 100 100"><use href="#gc791"/></svg><svg class="hg" viewBox="0 0 100 100"><use href="#gc5c5"/></svg><svg class="hg" viewBox="0 0 100 100"><use href="#gd3f4"/></svg><svg class="hg" viewBox="0 0 100 100"><use href="#gb354"/></svg></div>
<div class="cell " style="left:671px;top:375px;"><span class="kt">프롬프트설정값</span><svg class="hg" viewBox="0 0 100 100"><use href="#gd504"/></svg><svg class="hg" viewBox="0 0 100 100"><use href="#gb86c"/></svg><svg class="hg" viewBox="0 0 100 100"><use href="#gd504"/></svg><svg class="hg" viewBox="0 0 100 100"><use href="#gd2b8"/></svg><svg class="hg" viewBox="0 0 100 100"><use href="#gc124"/></svg><svg class="hg" viewBox="0 0 100 100"><use href="#gc815"/></svg><svg class="hg" viewBox="0 0 100 100"><use href="#gac12"/></svg></div>
<div class="cell " style="left:835px;top:375px;"><span class="kt">이미지설정값</span><svg class="hg" viewBox="0 0 100 100"><use href="#gc774"/></svg><svg class="hg" viewBox="0 0 100 100"><use href="#gbbf8"/></svg><svg class="hg" viewBox="0 0 100 100"><use href="#gc9c0"/></svg><svg class="hg" viewBox="0 0 100 100"><use href="#gc124"/></svg><svg class="hg" viewBox="0 0 100 100"><use href="#gc815"/></svg><svg class="hg" viewBox="0 0 100 100"><use href="#gac12"/></svg></div>
<div class="cell " style="left:957px;top:375px;"><span class="kt">키워드</span><svg class="hg" viewBox="0 0 100 100"><use href="#gd0a4"/></svg><svg class="hg" viewBox="0 0 100 100"><use href="#gc6cc"/></svg><svg class="hg" viewBox="0 0 100 100"><use href="#gb4dc"/></svg></div>
<div class="cell " style="left:1079px;top:375px;"><span class="kt">발행결과</span><svg class="hg" viewBox="0 0 100 100"><use href="#gbc1c"/></svg><svg class="hg" viewBox="0 0 100 100"><use href="#gd589"/></svg><svg class="hg" viewBox="0 0 100 100"><use href="#gacb0"/></svg><svg class="hg" viewBox="0 0 100 100"><use href="#gacfc"/></svg></div>
<div class="cell " style="left:1288px;top:375px;"><span class="kt">제목셋팅파일</span><svg class="hg" viewBox="0 0 100 100"><use href="#gc81c"/></svg><svg class="hg" viewBox="0 0 100 100"><use href="#gbaa9"/></svg><svg class="hg" viewBox="0 0 100 100"><use href="#gc14b"/></svg><svg class="hg" viewBox="0 0 100 100"><use href="#gd305"/></svg><svg class="hg" viewBox="0 0 100 100"><use href="#gd30c"/></svg><svg class="hg" viewBox="0 0 100 100"><use href="#gc77c"/></svg></div>
<div class="cell " style="left:38px;top:397px;"><span class="kt">완료</span><svg class="hg" viewBox="0 0 100 100"><use href="#gc644"/></svg><svg class="hg" viewBox="0 0 100 100"><use href="#gb8cc"/></svg></div>
<div class="cell r" style="left:112px;width:60px;top:397px">0</div>
<div class="cell " style="left:177px;top:397px;">tongki2882</div>
<div class="cell " style="left:267px;top:397px;"><span class="kt">암호</span><svg class="hg" viewBox="0 0 100 100"><use href="#gc554"/></svg><svg class="hg" viewBox="0 0 100 100"><use href="#gd638"/></svg></div>
<div class="cell " style="left:549px;top:397px;">test1</div>
<div class="cell r" style="left:770px;width:60px;top:397px">11</div>
<div class="cell r" style="left:891px;width:60px;top:397px">11</div>
<div class="cell " style="left:957px;top:397px;color:#0563c1"><span class="kt">키워드</span><svg class="hg" viewBox="0 0 100 100"><use href="#gd0a4"/></svg><svg class="hg" viewBox="0 0 100 100"><use href="#gc6cc"/></svg><svg class="hg" viewBox="0 0 100 100"><use href="#gb4dc"/></svg>1</div>
<div class="a" style="left:957px;top:412px;width:53px;height:1px;background:#0563c1"></div>
<div class="cell " style="left:1288px;top:397px;">title.txt</div>
<div class="cell " style="left:38px;top:419px;">o</div>
<div class="cell r" style="left:112px;width:60px;top:419px">0</div>
<div class="cell " style="left:177px;top:419px;">tongki2882</div>
<div class="cell " style="left:267px;top:419px;"><span class="kt">암호</span><svg class="hg" viewBox="0 0 100 100"><use href="#gc554"/></svg><svg class="hg" viewBox="0 0 100 100"><use href="#gd638"/></svg></div>
<div class="cell " style="left:549px;top:419px;">test2</div>
<div class="cell r" style="left:770px;width:60px;top:419px">11</div>
<div class="cell r" style="left:891px;width:60px;top:419px">11</div>
<div class="cell " style="left:957px;top:419px;color:#0563c1"><span class="kt">키워디</span><svg class="hg" viewBox="0 0 100 100"><use href="#gd0a4"/></svg><svg class="hg" viewBox="0 0 100 100"><use href="#gc6cc"/></svg><svg class="hg" viewBox="0 0 100 100"><use href="#gb514"/></svg>2</div>
<div class="a" style="left:957px;top:434px;width:53px;height:1px;background:#0563c1"></div>
<div class="cell " style="left:1288px;top:419px;">title.txt</div>
<div class="cell " style="left:38px;top:441px;"><span class="kt">완료</span><svg class="hg" viewBox="0 0 100 100"><use href="#gc644"/></svg><svg class="hg" viewBox="0 0 100 100"><use href="#gb8cc"/></svg></div>
<div class="cell r" style="left:112px;width:60px;top:441px">0</div>
<div class="cell " style="left:177px;top:441px;">tongki2882</div>
<div class="cell " style="left:267px;top:441px;"><span class="kt">암호</span><svg class="hg" viewBox="0 0 100 100"><use href="#gc554"/></svg><svg class="hg" viewBox="0 0 100 100"><use href="#gd638"/></svg></div>
<div class="cell " style="left:549px;top:441px;">test3</div>
<div class="cell r" style="left:770px;width:60px;top:441px">11</div>
<div class="cell r" style="left:891px;width:60px;top:441px">11</div>
<div class="cell " style="left:957px;top:441px;color:#0563c1"><span class="kt">키워드</span><svg class="hg" viewBox="0 0 100 100"><use href="#gd0a4"/></svg><svg class="hg" viewBox="0 0 100 100"><use href="#gc6cc"/></svg><svg class="hg" viewBox="0 0 100 100"><use href="#gb4dc"/></svg>3</div>
<div class="a" style="left:957px;top:456px;width:53px;height:1px;background:#0563c1"></div>
<div class="cell " style="left:1288px;top:441px;">title.txt</div>
<div class="a" style="left:953px;top:435px;width:125px;height:25px;border:2px solid #217346"></div>
<div class="a" style="left:1073px;top:455px;width:6px;height:6px;background:#217346;border:1px solid #fff"></div>
<div class="a" style="left:34px;top:362px;width:1352px;height:111px;border:3px solid #ff0000;border-radius:11px"></div>
<div class="a" style="left:1427px;top:255px;width:21px;height:367px;background:#e6e6e6"></div>
<div class="a" style="left:1430px;top:257px;width:15px;height:15px;background:#fff;border:1px solid #ababab"></div>
<svg class="a" style="left:1430px;top:257px" width="15" height="15"><path d="M3.5 9.5H11.5L7.5 5Z" fill="#606060"/></svg>
<div class="a" style="left:1430px;top:272px;width:15px;height:251px;background:#fff;border:1px solid #ababab"></div>
<div class="a" style="left:1430px;top:523px;width:15px;height:84px;background:#d6d6d6"></div>
<div class="a" style="left:1430px;top:607px;width:15px;height:15px;background:#fff;border:1px solid #ababab"></div>
<svg class="a" style="left:1430px;top:607px" width="15" height="15"><path d="M3.5 5.5H11.5L7.5 10Z" fill="#606060"/></svg>
<div class="a" style="left:0;top:621px;width:1449px;height:29px;background:#e6e6e6"></div>
<div class="a" style="left:0;top:621px;width:1427px;height:1px;background:#ababab"></div>
<svg class="a" style="left:20px;top:626px" width="50" height="16"><path d="M12 4V12L8 8Z" fill="#c0c0c0"/><path d="M38 4V12L42 8Z" fill="#c0c0c0"/></svg>
<div class="a" style="left:101px;top:621px;width:66px;height:25px;background:#fff;border-bottom:2px solid #217346;border-left:1px solid #c6c6c6;border-right:1px solid #c6c6c6"></div>
<div class="t" style="left:114px;top:628px;font-size:12.6px;color:#217346">Sheet1</div>
<svg class="a" style="left:199px;top:626px" width="18" height="18" fill="none" stroke="#707070" stroke-width="1.1"><circle cx="9" cy="9" r="7.2"/><path d="M9 5.5V12.5 M5.5 9H12.5" stroke-width="1.6"/></svg>
<svg class="a" style="left:868px;top:629px" width="4" height="14" fill="#a0a0a0"><rect x="0.5" y="1" width="2" height="2"/><rect x="0.5" y="6" width="2" height="2"/><rect x="0.5" y="11" width="2" height="2"/></svg>
<div class="a" style="left:886px;top:628px;width:15px;height:15px;background:#fff;border:1px solid #ababab"></div>
<svg class="a" style="left:886px;top:628px" width="15" height="15"><path d="M9.5 3.5V11.5L5 7.5Z" fill="#606060"/></svg>
<div class="a" style="left:901px;top:628px;width:468px;height:15px;background:#fff;border:1px solid #ababab"></div>
<div class="a" style="left:1369px;top:628px;width:43px;height:15px;background:#d6d6d6"></div>
<div class="a" style="left:1412px;top:628px;width:15px;height:15px;background:#fff;border:1px solid #ababab"></div>
<svg class="a" style="left:1412px;top:628px" width="15" height="15"><path d="M5.5 3.5V11.5L10 7.5Z" fill="#606060"/></svg>
<div class="a" style="left:0;top:649px;width:1449px;height:1px;background:#d0d0d0"></div>
<div class="a" style="left:0;top:650px;width:1449px;height:21px;background:#f3f2f1"></div>
<div class="t" style="left:8px;top:654px;font-size:12px;color:#333"><span class="kt">준비</span><svg class="hg" viewBox="0 0 100 100"><use href="#gc900"/></svg><svg class="hg" viewBox="0 0 100 100"><use href="#gbe44"/></svg></div>
<div class="a" style="left:1133px;top:650px;width:40px;height:21px;background:#d2d0ce"></div>
<svg class="a" style="left:1140px;top:650px" width="300" height="21" fill="none" stroke="#444" stroke-width="1">
<path d="M6.5 3.5H18.5V15.5H6.5Z M10.5 3.5V15.5 M14.5 3.5V15.5 M6.5 7.5H18.5 M6.5 11.5H18.5" stroke-width="1.4"/>
<path d="M46.5 3.5H59.5V15.5H46.5Z M49.5 6.5H56.5V12.5H49.5Z M51 8.5H55 M51 10.5H55"/>
<path d="M86.5 3.5H99.5V15.5H86.5Z M90.5 3.5V10.5 M94.5 3.5V10.5 M86.5 10.5H94.5" stroke-width="1.3"/>
<path d="M119 10.5H126" stroke="#555" stroke-width="1.2"/><path d="M132 10.5H232" stroke="#999"/>
<rect x="180" y="5" width="5" height="10" fill="#777" stroke="none"/>
<path d="M237 10.5H245 M241 6.5V14.5" stroke="#555" stroke-width="1.2"/>
</svg>
<div class="t" style="left:1398px;top:654px;font-size:13px;color:#555">100%</div>
<!--/GRID-->
<div class="a" style="left:0;top:35px;width:1px;height:637px;background:#217346"></div>
<div class="a" style="left:1448px;top:35px;width:1px;height:637px;background:#217346"></div>
<div class="a" style="left:0;top:671px;width:1449px;height:1px;background:#217346"></div>
</div>
</body></html>
